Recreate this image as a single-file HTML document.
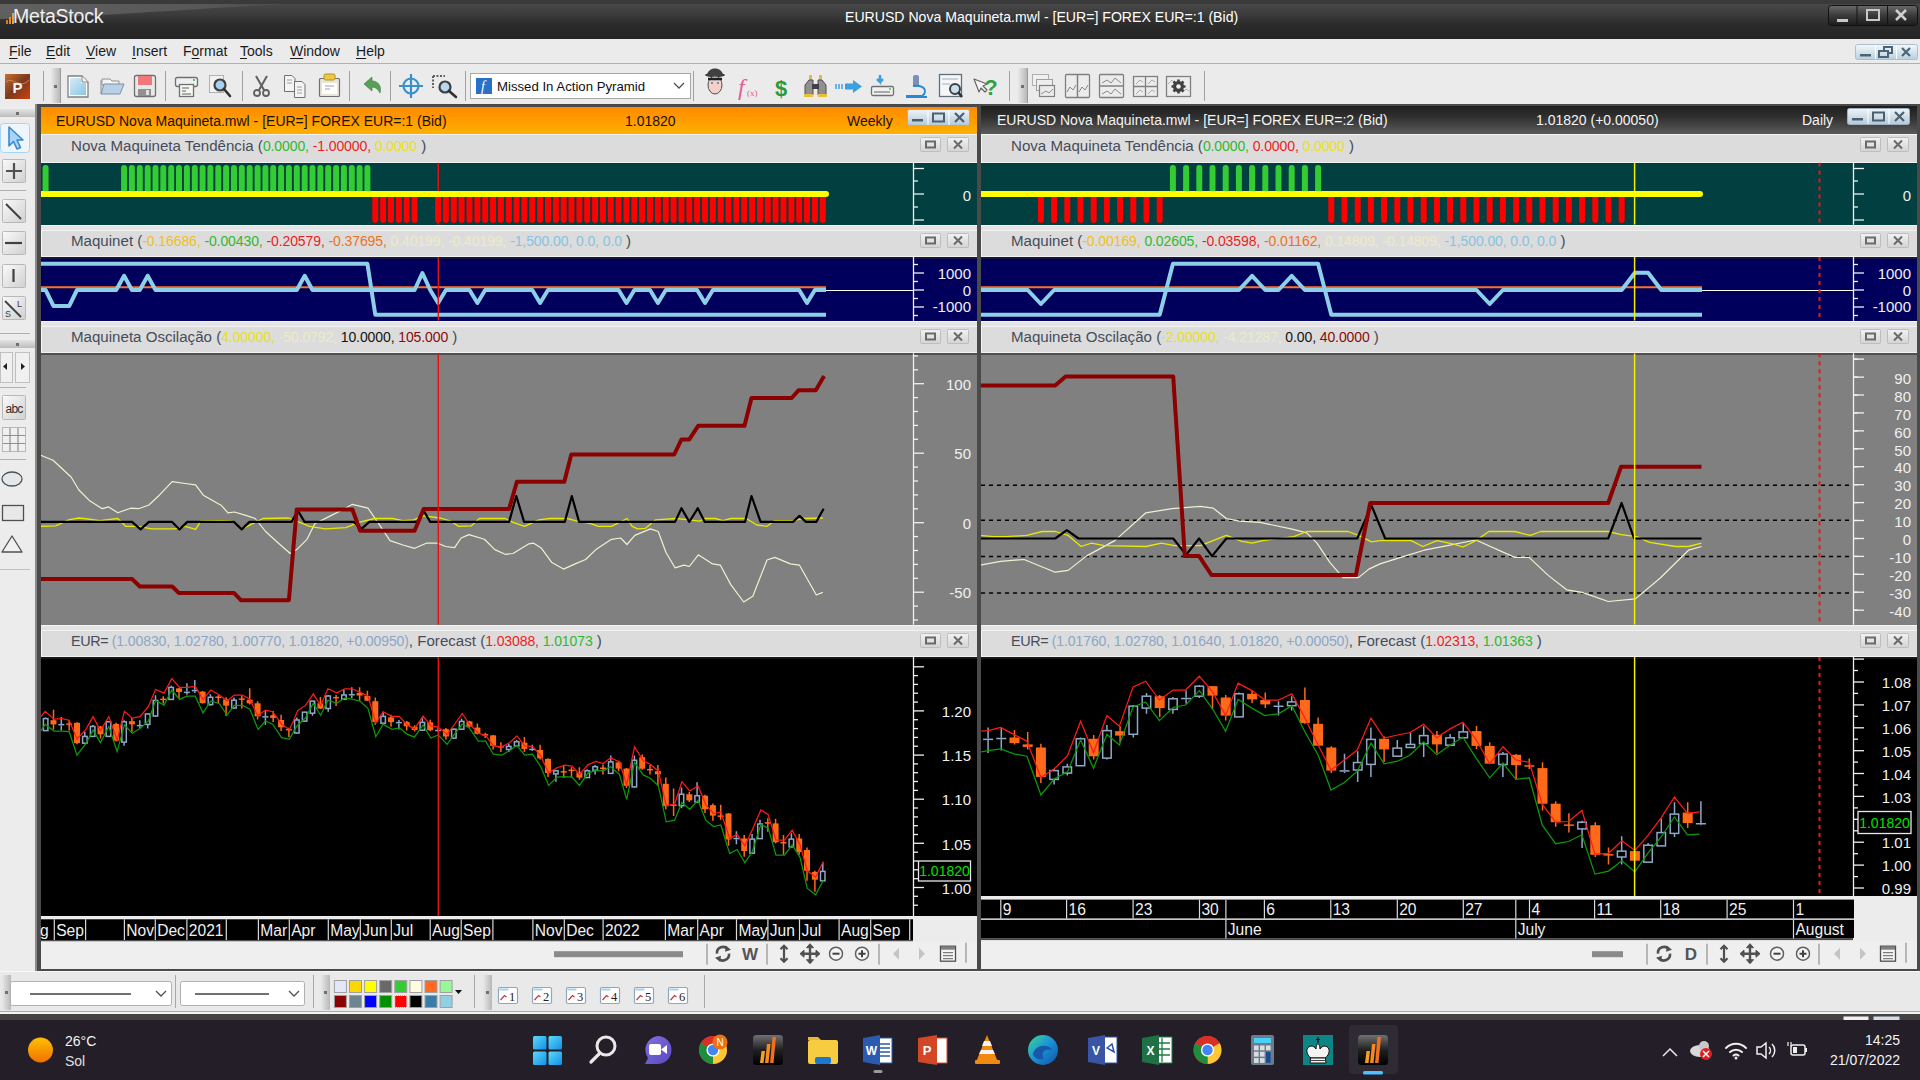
<!DOCTYPE html>
<html><head><meta charset="utf-8"><title>MetaStock</title>
<style>
html,body{margin:0;padding:0;width:1920px;height:1080px;overflow:hidden;background:#ebebeb;font-family:"Liberation Sans", sans-serif;}
div{box-sizing:border-box;}
svg{position:absolute;left:0;top:0;}
</style></head><body>
<div style="position:absolute;left:0px;top:0px;width:1920px;height:39px;background:linear-gradient(#3a3a3a 0px,#3a3a3a 3.5px,#484848 4px,#3c3c3c 14px,#2c2c2c 24px,#242424 39px);"></div><svg style="position:absolute;left:0;top:0" width="420" height="39"><defs><linearGradient id="gls" x1="0" y1="0" x2="1" y2="0"><stop offset="0" stop-color="#666"/><stop offset="0.7" stop-color="#5a5a5a"/><stop offset="1" stop-color="#484848"/></linearGradient></defs><path d="M0,4 H300 C220,6 120,16 0,19 Z" fill="url(#gls)" opacity="0.85"/></svg><svg style="position:absolute;left:5px;top:10px" width="10" height="15" viewBox="0 0 10 15"><rect x="1" y="10" width="2" height="4" fill="#e07818"/><rect x="4" y="7" width="2" height="7" fill="#f08820"/><rect x="7" y="3" width="2" height="11" fill="#f59a30"/></svg><div style="position:absolute;left:13px;top:7px;font-size:19.5px;color:#f0f0f0;white-space:pre;line-height:1;letter-spacing:-0.2px;">MetaStock</div><div style="position:absolute;left:845px;top:10px;font-size:14.1px;color:#ffffff;white-space:pre;line-height:1;">EURUSD Nova Maquineta.mwl - [EUR=] FOREX EUR=:1 (Bid)</div><svg style="position:absolute;left:1828px;top:5px" width="91" height="22" viewBox="0 0 91 22"><defs><linearGradient id="gwb" x1="0" y1="0" x2="0" y2="1"><stop offset="0" stop-color="#6a6a6a"/><stop offset="0.5" stop-color="#3a3a3a"/><stop offset="1" stop-color="#1c1c1c"/></linearGradient></defs><rect x="0.5" y="0.5" width="89" height="20" rx="3" fill="url(#gwb)" stroke="#111"/><line x1="29" y1="1" x2="29" y2="20" stroke="#151515"/><line x1="59.5" y1="1" x2="59.5" y2="20" stroke="#151515"/><rect x="9" y="14" width="11" height="3" fill="#c8c8c8"/><rect x="39" y="5" width="12" height="10" fill="none" stroke="#c8c8c8" stroke-width="2"/><path d="M68,5 L78,15 M78,5 L68,15" stroke="#d0d0d0" stroke-width="2.5"/></svg><div style="position:absolute;left:0px;top:39px;width:1920px;height:25px;background:#ebebeb;border-bottom:1px solid #b0b0b0;box-sizing:border-box;"></div><div style="position:absolute;left:9px;top:44px;font-size:14px;color:#1a1a1a;white-space:pre;line-height:1;text-decoration-thickness:1px;text-underline-offset:2px;"><u>F</u>ile</div><div style="position:absolute;left:46px;top:44px;font-size:14px;color:#1a1a1a;white-space:pre;line-height:1;text-decoration-thickness:1px;text-underline-offset:2px;"><u>E</u>dit</div><div style="position:absolute;left:86px;top:44px;font-size:14px;color:#1a1a1a;white-space:pre;line-height:1;text-decoration-thickness:1px;text-underline-offset:2px;"><u>V</u>iew</div><div style="position:absolute;left:132px;top:44px;font-size:14px;color:#1a1a1a;white-space:pre;line-height:1;text-decoration-thickness:1px;text-underline-offset:2px;"><u>I</u>nsert</div><div style="position:absolute;left:183px;top:44px;font-size:14px;color:#1a1a1a;white-space:pre;line-height:1;text-decoration-thickness:1px;text-underline-offset:2px;">F<u>o</u>rmat</div><div style="position:absolute;left:240px;top:44px;font-size:14px;color:#1a1a1a;white-space:pre;line-height:1;text-decoration-thickness:1px;text-underline-offset:2px;"><u>T</u>ools</div><div style="position:absolute;left:290px;top:44px;font-size:14px;color:#1a1a1a;white-space:pre;line-height:1;text-decoration-thickness:1px;text-underline-offset:2px;"><u>W</u>indow</div><div style="position:absolute;left:356px;top:44px;font-size:14px;color:#1a1a1a;white-space:pre;line-height:1;text-decoration-thickness:1px;text-underline-offset:2px;"><u>H</u>elp</div><svg style="position:absolute;left:1855px;top:44px" width="64" height="17" viewBox="0 0 64 17"><defs><linearGradient id="gmdi" x1="0" y1="0" x2="0" y2="1"><stop offset="0" stop-color="#f4f8fb"/><stop offset="1" stop-color="#b8d0de"/></linearGradient></defs><rect x="0.5" y="0.5" width="62" height="15" rx="2" fill="url(#gmdi)" stroke="#a8c0d0"/><line x1="20.5" y1="1" x2="20.5" y2="15" stroke="#fff"/><line x1="41.5" y1="1" x2="41.5" y2="15" stroke="#fff"/><rect x="5" y="10" width="11" height="2.5" fill="#4a6478"/><rect x="24" y="7" width="9" height="6" fill="none" stroke="#4a6478" stroke-width="2"/><path d="M29,6 V3 H37 V9 H34" fill="none" stroke="#4a6478" stroke-width="2"/><path d="M47,4 L55,12 M55,4 L47,12" stroke="#4a6478" stroke-width="2.2"/></svg><div style="position:absolute;left:0px;top:64px;width:1920px;height:40px;background:#ebebeb;"></div><svg style="position:absolute;left:0px;top:0px" width="1220" height="105" viewBox="0 0 1220 105"><defs>
<linearGradient id="gbtn" x1="0" y1="0" x2="1" y2="1"><stop offset="0" stop-color="#fafafa"/><stop offset="1" stop-color="#d0d0d0"/></linearGradient>
<linearGradient id="gdoc" x1="0" y1="0" x2="1" y2="1"><stop offset="0" stop-color="#d8ecf8"/><stop offset="1" stop-color="#8cc4e4"/></linearGradient>
<linearGradient id="gP" x1="0" y1="0" x2="1" y2="1"><stop offset="0" stop-color="#c87030"/><stop offset="0.5" stop-color="#7a3a20"/><stop offset="1" stop-color="#d04010"/></linearGradient>
<linearGradient id="ggrip" x1="0" y1="0" x2="1" y2="0"><stop offset="0" stop-color="#e8e8e8"/><stop offset="1" stop-color="#b8b8b8"/></linearGradient>
<linearGradient id="ggripv" x1="0" y1="0" x2="0" y2="1"><stop offset="0" stop-color="#e4e4e4"/><stop offset="1" stop-color="#bcbcbc"/></linearGradient>
</defs><rect x="5" y="74" width="25" height="25" fill="url(#gP)"/><path d="M6,82 C12,76 20,90 29,80" stroke="#e8a060" stroke-width="1" fill="none" opacity="0.7"/><text x="17.5" y="93" text-anchor="middle" font-family="Liberation Sans" font-weight="bold" font-size="15" fill="#f4f4f4">P</text><line x1="43.5" y1="71" x2="43.5" y2="101" stroke="#a0a0a0" stroke-width="1"/><line x1="165.5" y1="71" x2="165.5" y2="101" stroke="#a0a0a0" stroke-width="1"/><line x1="242.5" y1="71" x2="242.5" y2="101" stroke="#a0a0a0" stroke-width="1"/><line x1="349.5" y1="71" x2="349.5" y2="101" stroke="#a0a0a0" stroke-width="1"/><line x1="390.5" y1="71" x2="390.5" y2="101" stroke="#a0a0a0" stroke-width="1"/><line x1="465.5" y1="71" x2="465.5" y2="101" stroke="#a0a0a0" stroke-width="1"/><line x1="693.5" y1="71" x2="693.5" y2="101" stroke="#a0a0a0" stroke-width="1"/><line x1="1009.5" y1="71" x2="1009.5" y2="101" stroke="#a0a0a0" stroke-width="1"/><line x1="1204.5" y1="71" x2="1204.5" y2="101" stroke="#a0a0a0" stroke-width="1"/><rect x="51" y="68" width="9" height="35" fill="url(#ggrip)"/><line x1="60.5" y1="68" x2="60.5" y2="103" stroke="#9a9a9a"/><rect x="54" y="85" width="3" height="3" fill="#707070"/><rect x="1018" y="68" width="9" height="35" fill="url(#ggrip)"/><line x1="1027.5" y1="68" x2="1027.5" y2="103" stroke="#9a9a9a"/><rect x="1021" y="85" width="3" height="3" fill="#707070"/><path d="M68,76 H82 L88,82 V97 H68 Z" fill="#fff" stroke="#808080" stroke-width="1.3"/><path d="M70,78 H81 V83 H86 V95 H70 Z" fill="url(#gdoc)"/><path d="M82,76 V82 H88" fill="#f4f4f4" stroke="#808080" stroke-width="1"/><path d="M102,79 H110 L112,81 H119 V85 H102 Z" fill="#f4f4f4" stroke="#909090"/><path d="M101,94 L104,84 H124 L120,94 Z" fill="#b8d0e8" stroke="#8090a0"/><path d="M101,94 V80" stroke="#909090"/><rect x="134.5" y="75.5" width="21" height="21" rx="2" fill="#e8e8e8" stroke="#707070" stroke-width="1.3"/><rect x="138" y="76" width="14" height="9" fill="#f07878"/><rect x="138" y="89" width="13" height="7" fill="#909090"/><rect x="146" y="90" width="3" height="5" fill="#e0e0e0"/><rect x="175.5" y="77.5" width="22" height="9" rx="2" fill="#f0f0f0" stroke="#707070" stroke-width="1.3"/><rect x="179.5" y="84.5" width="14" height="12" fill="#f4f8f0" stroke="#707070" stroke-width="1.3"/><line x1="182" y1="88" x2="189" y2="88" stroke="#606060"/><line x1="182" y1="91" x2="186" y2="91" stroke="#606060"/><line x1="182" y1="94" x2="191" y2="94" stroke="#606060"/><circle cx="194" cy="80" r="1" fill="#40b040"/><rect x="209.5" y="75.5" width="14" height="17" fill="#f2f2f2" stroke="#b0b0b0"/><circle cx="220" cy="85" r="5.5" fill="#a8d0f0" stroke="#404040" stroke-width="2.2"/><line x1="224" y1="89" x2="230" y2="96" stroke="#303030" stroke-width="2.6" stroke-linecap="round"/><path d="M256,76 L264,90 M267,76 L259,90" stroke="#606060" stroke-width="2"/><circle cx="257" cy="93" r="3" fill="none" stroke="#606060" stroke-width="1.8"/><circle cx="266" cy="93" r="3" fill="none" stroke="#606060" stroke-width="1.8"/><path d="M284.5,75.5 H292 L295,78.5 V91.5 H284.5 Z" fill="#f4f4f4" stroke="#707070"/><path d="M294.5,81.5 H302 L305,84.5 V97.5 H294.5 Z" fill="#f4f4f4" stroke="#707070"/><path d="M287,80 H292 M287,83 H292 M297,87 H302 M297,90 H302 M297,93 H302" stroke="#a0a0a0"/><rect x="319.5" y="78.5" width="20" height="18" rx="1" fill="#e8e4d8" stroke="#707070" stroke-width="1.2"/><rect x="322" y="83" width="15" height="11" fill="#fff"/><rect x="324" y="74" width="11" height="6" rx="1.5" fill="#f0c840" stroke="#b09020"/><path d="M325,86 H334 M325,89 H330" stroke="#a0a0a0"/><path d="M364,84 L372,77 V81 C378,81 382,86 380,93 C378,89 375,87 372,87 V91 Z" fill="#58a058" stroke="#3a7a3a" stroke-width="0.6"/><circle cx="411" cy="86" r="7.5" fill="#e8eef4" stroke="#3a90c8" stroke-width="2.2"/><path d="M411,74 V98 M399,86 H423" stroke="#3a90c8" stroke-width="2.2"/><path d="M433,76 H445 M433,76 V88" stroke="#606060" stroke-width="2" stroke-dasharray="2,1.5"/><circle cx="445" cy="87" r="5.5" fill="#b8d8f0" stroke="#404040" stroke-width="2.2"/><line x1="449" y1="91" x2="456" y2="97" stroke="#303030" stroke-width="2.6" stroke-linecap="round"/><rect x="470.5" y="73.5" width="220" height="25" fill="#fff" stroke="#a8a8a8"/><rect x="476" y="78" width="16" height="16" fill="#2a70c8"/><text x="483" y="91" text-anchor="middle" font-family="Liberation Serif" font-style="italic" font-size="14" fill="#fff">f</text><text x="497" y="91" font-family="Liberation Sans" font-size="13.2" fill="#101010">Missed In Action Pyramid</text><path d="M674,83 L679,88 L684,83" fill="none" stroke="#505050" stroke-width="1.3"/><ellipse cx="715" cy="75" rx="10" ry="2" fill="#303030"/><path d="M707,76 C707,66 723,66 723,76 Z" fill="#404040"/><ellipse cx="715" cy="85" rx="7" ry="9" fill="#f4d0c8" stroke="#505050"/><path d="M708,79 H722" stroke="#202020" stroke-width="2.5"/><circle cx="712" cy="83" r="1" fill="#4080c0"/><circle cx="718" cy="83" r="1" fill="#4080c0"/><text x="738" y="95" font-family="Liberation Serif" font-style="italic" font-size="24" fill="#e06090">f</text><text x="747" y="96" font-family="Liberation Serif" font-size="9" fill="#e06090">(x)</text><text x="781" y="96" text-anchor="middle" font-family="Liberation Sans" font-weight="bold" font-size="22" fill="#2a9a3a">$</text><rect x="809" y="75" width="3" height="6" fill="#d8c050"/><rect x="819" y="75" width="3" height="6" fill="#d8c050"/><path d="M805,95 V85 L809,80 H813 V95 Z M826,95 V85 L822,80 H818 V95 Z" fill="#909090" stroke="#505050"/><rect x="812" y="84" width="7" height="5" fill="#404040"/><rect x="804" y="94" width="9" height="3" fill="#e8c040"/><rect x="818" y="94" width="9" height="3" fill="#e8c040"/><path d="M836,84 V89 M839,84 V89 M842,84 V89" stroke="#40a0e0" stroke-width="1.5"/><path d="M845,83.5 H853 V80 L862,86.5 L853,93 V89.5 H845 Z" fill="#3aa0e0"/><path d="M880,75 V82 L877,79 M880,82 L883,79" stroke="#3aa0e0" stroke-width="2.5" fill="none"/><rect x="871.5" y="86.5" width="22" height="9" rx="1.5" fill="#f0f0f0" stroke="#707070" stroke-width="1.3"/><line x1="874" y1="92" x2="890" y2="92" stroke="#606060"/><circle cx="890" cy="89" r="0.9" fill="#40c040"/><rect x="913" y="75" width="6" height="12" rx="2" fill="#7a90b8"/><path d="M913,86 C925,84 928,92 922,96 H906" fill="none" stroke="#2a88d0" stroke-width="2"/><line x1="906" y1="97" x2="927" y2="97" stroke="#2a88d0" stroke-width="2"/><rect x="939.5" y="74.5" width="22" height="22" fill="#f4f6f8" stroke="#607080" stroke-width="1.3"/><path d="M942,79 H958 M942,84 H950" stroke="#a0b0c0"/><circle cx="955" cy="89" r="5" fill="#c8e0f0" stroke="#404040" stroke-width="2"/><line x1="958" y1="92" x2="962" y2="97" stroke="#303030" stroke-width="2.5"/><path d="M974,79 L979,92 L981,88 L985,92 L987,90 L983,86 L987,84 Z" fill="#f4f4f4" stroke="#606060" stroke-width="1.1" stroke-linejoin="round"/><text x="991" y="95" text-anchor="middle" font-family="Liberation Sans" font-weight="bold" font-size="22" fill="#30a040">?</text><rect x="1032.5" y="74.5" width="16" height="11" fill="#f0f0f0" stroke="#b0b0b0"/><rect x="1036.5" y="79.5" width="16" height="11" fill="#eee" stroke="#a0a0a0"/><rect x="1039.5" y="85.5" width="15" height="11" fill="#eaeaea" stroke="#808080" stroke-width="1.2"/><path d="M1041,94 L1046,91 L1049,93 L1053,89" fill="none" stroke="#909090"/><rect x="1065.5" y="74.5" width="24" height="23" rx="1" fill="#ececec" stroke="#808080" stroke-width="1.3"/><rect x="1099.5" y="74.5" width="24" height="23" rx="1" fill="#ececec" stroke="#808080" stroke-width="1.3"/><line x1="1077.5" y1="75" x2="1077.5" y2="97" stroke="#808080" stroke-width="1.5"/><path d="M1067,92 L1070,87 L1073,90 L1076,85 M1079,92 L1082,87 L1085,90 L1088,85" fill="none" stroke="#888"/><line x1="1100" y1="86" x2="1123" y2="86" stroke="#808080" stroke-width="1.5"/><path d="M1102,83 L1107,80 L1111,83 L1115,78 L1121,83 M1102,94 L1107,91 L1111,94 L1115,89 L1121,94" fill="none" stroke="#888"/><rect x="1133.5" y="76.5" width="24" height="20" fill="#ececec" stroke="#808080" stroke-width="1.3"/><path d="M1145.5,77 V96 M1134,86.5 H1157" stroke="#808080" stroke-width="1.3"/><path d="M1136,84 L1140,80 L1143,82 M1148,84 L1152,80 L1155,82 M1136,94 L1140,90 L1143,92 M1148,94 L1152,90 L1155,92" fill="none" stroke="#a0a0a0" stroke-width="0.9"/><rect x="1166.5" y="76.5" width="24" height="20" fill="#ececec" stroke="#808080" stroke-width="1.3"/><path d="M1168,84 L1172,80 L1175,83 M1182,93 L1186,89 L1189,91" fill="none" stroke="#a8a8a8" stroke-width="0.9"/><circle cx="1178.5" cy="86.5" r="5.5" fill="#404040"/><path d="M1178.5,79.5 V93.5 M1171.5,86.5 H1185.5 M1173.5,81.5 L1183.5,91.5 M1183.5,81.5 L1173.5,91.5" stroke="#404040" stroke-width="2.6"/><circle cx="1178.5" cy="86.5" r="2.3" fill="#f0f0f0"/></svg><div style="position:absolute;left:35px;top:104px;width:1885px;height:867px;background:#4a4a4a;"></div><div style="position:absolute;left:35px;top:104px;width:2px;height:867px;background:#8a8a8a;"></div><div style="position:absolute;left:0px;top:104px;width:35px;height:867px;background:#ececec;"></div><svg style="position:absolute;left:0px;top:0px" width="36" height="580" viewBox="0 0 36 580"><defs>
<linearGradient id="gbtn" x1="0" y1="0" x2="1" y2="1"><stop offset="0" stop-color="#fafafa"/><stop offset="1" stop-color="#d0d0d0"/></linearGradient>
<linearGradient id="gdoc" x1="0" y1="0" x2="1" y2="1"><stop offset="0" stop-color="#d8ecf8"/><stop offset="1" stop-color="#8cc4e4"/></linearGradient>
<linearGradient id="gP" x1="0" y1="0" x2="1" y2="1"><stop offset="0" stop-color="#c87030"/><stop offset="0.5" stop-color="#7a3a20"/><stop offset="1" stop-color="#d04010"/></linearGradient>
<linearGradient id="ggrip" x1="0" y1="0" x2="1" y2="0"><stop offset="0" stop-color="#e8e8e8"/><stop offset="1" stop-color="#b8b8b8"/></linearGradient>
<linearGradient id="ggripv" x1="0" y1="0" x2="0" y2="1"><stop offset="0" stop-color="#e4e4e4"/><stop offset="1" stop-color="#bcbcbc"/></linearGradient>
</defs><rect x="0" y="109" width="35" height="8" fill="url(#ggripv)"/><rect x="16" y="112" width="3" height="3" fill="#707070"/><rect x="0" y="340" width="35" height="8" fill="url(#ggripv)"/><rect x="16" y="343" width="3" height="3" fill="#707070"/><rect x="0.5" y="123.5" width="29" height="29" rx="3" fill="#eef6fc" stroke="#a8d4f4"/><path d="M9,127 L9,146 L13.5,141.5 L17,149 L20.5,147.5 L17,140 L23,140 Z" fill="#a8d4f8" stroke="#3a88d0" stroke-width="1.6" stroke-linejoin="round"/><rect x="2.5" y="159.5" width="23" height="23" rx="1" fill="url(#gbtn)" stroke="#b8b8b8"/><path d="M14,163 V179 M6,171 H22" stroke="#505050" stroke-width="2.2"/><line x1="0" y1="190.5" x2="26" y2="190.5" stroke="#b0b0b0"/><rect x="2.5" y="199.5" width="23" height="23" rx="1" fill="url(#gbtn)" stroke="#b8b8b8"/><path d="M6,204 L21,219" stroke="#404040" stroke-width="2"/><rect x="2.5" y="231.5" width="23" height="23" rx="1" fill="url(#gbtn)" stroke="#b8b8b8"/><path d="M5,243 H22" stroke="#404040" stroke-width="2.2"/><rect x="2.5" y="264.5" width="23" height="23" rx="1" fill="url(#gbtn)" stroke="#b8b8b8"/><path d="M13.5,269 V282" stroke="#404040" stroke-width="2.2"/><rect x="2.5" y="296.5" width="23" height="23" rx="1" fill="url(#gbtn)" stroke="#b8b8b8"/><path d="M5,301 L21,317" stroke="#404040" stroke-width="1.8"/><text x="5" y="317" font-family="Liberation Sans" font-size="9" fill="#404040">S</text><text x="17" y="307" font-family="Liberation Sans" font-size="9" fill="#404040">L</text><line x1="0" y1="333.5" x2="30" y2="333.5" stroke="#b0b0b0"/><rect x="0.5" y="352.5" width="12" height="30" fill="#f0f0f0" stroke="#c0c0c0"/><rect x="15.5" y="352.5" width="14" height="30" fill="#f0f0f0" stroke="#c0c0c0"/><path d="M3,366.5 L7,363 V370 Z" fill="#202020"/><path d="M21,363 L25,366.5 L21,370 Z" fill="#202020"/><line x1="0" y1="387.5" x2="26" y2="387.5" stroke="#b0b0b0"/><rect x="2.5" y="395.5" width="23" height="24" rx="1" fill="url(#gbtn)" stroke="#b8b8b8"/><text x="14" y="413" text-anchor="middle" font-family="Liberation Sans" font-size="12" fill="#303030" letter-spacing="-0.8">abc</text><rect x="2.5" y="427.5" width="23" height="24" fill="#f0f0f0" stroke="#b8b8b8"/><path d="M10,428 V451 M18,428 V451 M3,435.5 H25 M3,443.5 H25" stroke="#909090" stroke-width="1.2"/><line x1="0" y1="459.5" x2="26" y2="459.5" stroke="#b0b0b0"/><ellipse cx="12" cy="479" rx="10" ry="7" fill="#e4e8ec" stroke="#505050" stroke-width="1.3"/><rect x="2.5" y="505.5" width="21" height="15" fill="#e8e8e8" stroke="#505050" stroke-width="1.3"/><path d="M12,536 L22,552 H2 Z" fill="#f0f0f0" stroke="#505050" stroke-width="1.3" stroke-linejoin="round"/><line x1="0" y1="569.5" x2="30" y2="569.5" stroke="#c0c0c0"/></svg><div style="position:absolute;left:41px;top:107px;width:936px;height:862px;background:#ebebeb;"></div><div style="position:absolute;left:41px;top:107px;width:936px;height:27px;background:linear-gradient(#ff8a00,#ffb000);"></div><div style="position:absolute;left:56px;top:113.8px;font-size:14px;color:#1a1000;white-space:pre;line-height:1;">EURUSD Nova Maquineta.mwl - [EUR=] FOREX EUR=:1 (Bid)</div><div style="position:absolute;left:625px;top:113.8px;font-size:14px;color:#1a1000;white-space:pre;line-height:1;">1.01820</div><div style="position:absolute;left:847px;top:113.8px;font-size:14px;color:#1a1000;white-space:pre;line-height:1;">Weekly</div><svg style="position:absolute;left:907px;top:109px" width="64" height="18" viewBox="0 0 64 18"><defs><linearGradient id="gwin" x1="0" y1="0" x2="0" y2="1"><stop offset="0" stop-color="#eef4f8"/><stop offset="1" stop-color="#b4c8d8"/></linearGradient></defs><rect x="0.5" y="0.5" width="62" height="16" rx="2" fill="url(#gwin)" stroke="#9ab0c0"/><line x1="21" y1="1" x2="21" y2="16" stroke="#fff"/><line x1="42" y1="1" x2="42" y2="16" stroke="#fff"/><rect x="5" y="10" width="11" height="2.5" fill="#4a6070"/><rect x="26" y="4.5" width="11" height="8" fill="none" stroke="#4a6070" stroke-width="2"/><path d="M48,4 L57,13 M57,4 L48,13" stroke="#4a6070" stroke-width="2.2"/></svg><div style="position:absolute;left:981px;top:107px;width:936px;height:862px;background:#ebebeb;"></div><div style="position:absolute;left:981px;top:106px;width:936px;height:27.5px;background:linear-gradient(#1e1e1e 0%,#303030 40%,#5a5a5a 100%);"></div><div style="position:absolute;left:997px;top:112.8px;font-size:14px;color:#f4f4f4;white-space:pre;line-height:1;">EURUSD Nova Maquineta.mwl - [EUR=] FOREX EUR=:2 (Bid)</div><div style="position:absolute;left:1536px;top:112.8px;font-size:14px;color:#f4f4f4;white-space:pre;line-height:1;">1.01820 (+0.00050)</div><div style="position:absolute;left:1802px;top:112.8px;font-size:14px;color:#f4f4f4;white-space:pre;line-height:1;">Daily</div><svg style="position:absolute;left:1847px;top:108px" width="64" height="18" viewBox="0 0 64 18"><defs><linearGradient id="gwin" x1="0" y1="0" x2="0" y2="1"><stop offset="0" stop-color="#eef4f8"/><stop offset="1" stop-color="#b4c8d8"/></linearGradient></defs><rect x="0.5" y="0.5" width="62" height="16" rx="2" fill="url(#gwin)" stroke="#9ab0c0"/><line x1="21" y1="1" x2="21" y2="16" stroke="#fff"/><line x1="42" y1="1" x2="42" y2="16" stroke="#fff"/><rect x="5" y="10" width="11" height="2.5" fill="#4a6070"/><rect x="26" y="4.5" width="11" height="8" fill="none" stroke="#4a6070" stroke-width="2"/><path d="M48,4 L57,13 M57,4 L48,13" stroke="#4a6070" stroke-width="2.2"/></svg><div style="position:absolute;left:41px;top:134px;width:936px;height:28.5px;background:#dcdcdc;border-top:1px solid #f2f2f2;border-left:1px solid #f6f6f6;border-bottom:1px solid #f2f2f2;box-sizing:border-box;"></div><div style="position:absolute;left:71px;top:138.0px;font-size:15.1px;color:#474c5a;white-space:pre;line-height:1;"><span style="color:#474c5a;font-size:15.1px">Nova Maquineta Tendência (</span><span style="color:#2fb82f;font-size:14px;letter-spacing:-0.1px">0.0000, </span><span style="color:#ee1c1c;font-size:14px;letter-spacing:-0.1px">-1.00000, </span><span style="color:#e8e020;font-size:14px;letter-spacing:-0.1px">0.0000</span><span style="color:#474c5a;font-size:15.1px"> )</span></div><svg style="position:absolute;left:920px;top:137.3px" width="50" height="16" viewBox="0 0 50 16"><defs><linearGradient id="ghb" x1="0" y1="0" x2="0" y2="1"><stop offset="0" stop-color="#f2f2f2"/><stop offset="1" stop-color="#d4d4d4"/></linearGradient></defs><rect x="0.5" y="0.5" width="20" height="14" rx="1" fill="url(#ghb)" stroke="#bdbdbd"/><rect x="27.5" y="0.5" width="21" height="14" rx="1" fill="url(#ghb)" stroke="#bdbdbd"/><rect x="6" y="4.5" width="9" height="6" fill="none" stroke="#6a6a6a" stroke-width="2"/><path d="M34,3.5 L42,11.5 M42,3.5 L34,11.5" stroke="#6a6a6a" stroke-width="2"/></svg><div style="position:absolute;left:41px;top:224.8px;width:936px;height:5.2px;background:#e4e4e4;border-top:1px solid #f6f6f6;box-sizing:border-box;"></div><div style="position:absolute;left:41px;top:230.0px;width:936px;height:27.0px;background:#dcdcdc;border-top:1px solid #f2f2f2;border-left:1px solid #f6f6f6;border-bottom:1px solid #f2f2f2;box-sizing:border-box;"></div><div style="position:absolute;left:71px;top:232.5px;font-size:15.1px;color:#474c5a;white-space:pre;line-height:1;"><span style="color:#474c5a;font-size:15.1px">Maquinet (</span><span style="color:#f0c020;font-size:14px;letter-spacing:-0.1px">-0.16686, </span><span style="color:#2fb82f;font-size:14px;letter-spacing:-0.1px">-0.00430, </span><span style="color:#ee1c1c;font-size:14px;letter-spacing:-0.1px">-0.20579, </span><span style="color:#f07020;font-size:14px;letter-spacing:-0.1px">-0.37695, </span><span style="color:#ecebc8;font-size:14px;letter-spacing:-0.1px">0.40199, </span><span style="color:#ecebc8;font-size:14px;letter-spacing:-0.1px">-0.40199, </span><span style="color:#87c3e0;font-size:14px;letter-spacing:-0.1px">-1,500.00, 0.0, 0.0</span><span style="color:#474c5a;font-size:15.1px"> )</span></div><svg style="position:absolute;left:920px;top:233.3px" width="50" height="16" viewBox="0 0 50 16"><defs><linearGradient id="ghb" x1="0" y1="0" x2="0" y2="1"><stop offset="0" stop-color="#f2f2f2"/><stop offset="1" stop-color="#d4d4d4"/></linearGradient></defs><rect x="0.5" y="0.5" width="20" height="14" rx="1" fill="url(#ghb)" stroke="#bdbdbd"/><rect x="27.5" y="0.5" width="21" height="14" rx="1" fill="url(#ghb)" stroke="#bdbdbd"/><rect x="6" y="4.5" width="9" height="6" fill="none" stroke="#6a6a6a" stroke-width="2"/><path d="M34,3.5 L42,11.5 M42,3.5 L34,11.5" stroke="#6a6a6a" stroke-width="2"/></svg><div style="position:absolute;left:41px;top:320.8px;width:936px;height:5.2px;background:#e4e4e4;border-top:1px solid #f6f6f6;box-sizing:border-box;"></div><div style="position:absolute;left:41px;top:326.0px;width:936px;height:27.30000000000001px;background:#dcdcdc;border-top:1px solid #f2f2f2;border-left:1px solid #f6f6f6;border-bottom:1px solid #f2f2f2;box-sizing:border-box;"></div><div style="position:absolute;left:71px;top:328.8px;font-size:15.1px;color:#474c5a;white-space:pre;line-height:1;"><span style="color:#474c5a;font-size:15.1px">Maquineta Oscilação (</span><span style="color:#e8e020;font-size:14px;letter-spacing:-0.1px">4.00000, </span><span style="color:#ecebc8;font-size:14px;letter-spacing:-0.1px">-50.0792, </span><span style="color:#141414;font-size:14px;letter-spacing:-0.1px">10.0000, </span><span style="color:#8b0a0a;font-size:14px;letter-spacing:-0.1px">105.000</span><span style="color:#474c5a;font-size:15.1px"> )</span></div><svg style="position:absolute;left:920px;top:329.3px" width="50" height="16" viewBox="0 0 50 16"><defs><linearGradient id="ghb" x1="0" y1="0" x2="0" y2="1"><stop offset="0" stop-color="#f2f2f2"/><stop offset="1" stop-color="#d4d4d4"/></linearGradient></defs><rect x="0.5" y="0.5" width="20" height="14" rx="1" fill="url(#ghb)" stroke="#bdbdbd"/><rect x="27.5" y="0.5" width="21" height="14" rx="1" fill="url(#ghb)" stroke="#bdbdbd"/><rect x="6" y="4.5" width="9" height="6" fill="none" stroke="#6a6a6a" stroke-width="2"/><path d="M34,3.5 L42,11.5 M42,3.5 L34,11.5" stroke="#6a6a6a" stroke-width="2"/></svg><div style="position:absolute;left:41px;top:624.7px;width:936px;height:5.2px;background:#e4e4e4;border-top:1px solid #f6f6f6;box-sizing:border-box;"></div><div style="position:absolute;left:41px;top:629.9000000000001px;width:936px;height:27.09999999999991px;background:#dcdcdc;border-top:1px solid #f2f2f2;border-left:1px solid #f6f6f6;border-bottom:1px solid #f2f2f2;box-sizing:border-box;"></div><div style="position:absolute;left:71px;top:632.5px;font-size:15.1px;color:#474c5a;white-space:pre;line-height:1;"><span style="color:#474c5a;font-size:14.4px;letter-spacing:-0.4px">EUR= </span><span style="color:#8aa6c8;font-size:14px;letter-spacing:-0.1px">(1.00830, 1.02780, 1.00770, 1.01820, +0.00950)</span><span style="color:#474c5a;font-size:15.1px">, Forecast (</span><span style="color:#ee1c1c;font-size:14px;letter-spacing:-0.1px">1.03088, </span><span style="color:#2fb82f;font-size:14px;letter-spacing:-0.1px">1.01073</span><span style="color:#474c5a;font-size:15.1px"> )</span></div><svg style="position:absolute;left:920px;top:633.2px" width="50" height="16" viewBox="0 0 50 16"><defs><linearGradient id="ghb" x1="0" y1="0" x2="0" y2="1"><stop offset="0" stop-color="#f2f2f2"/><stop offset="1" stop-color="#d4d4d4"/></linearGradient></defs><rect x="0.5" y="0.5" width="20" height="14" rx="1" fill="url(#ghb)" stroke="#bdbdbd"/><rect x="27.5" y="0.5" width="21" height="14" rx="1" fill="url(#ghb)" stroke="#bdbdbd"/><rect x="6" y="4.5" width="9" height="6" fill="none" stroke="#6a6a6a" stroke-width="2"/><path d="M34,3.5 L42,11.5 M42,3.5 L34,11.5" stroke="#6a6a6a" stroke-width="2"/></svg><div style="position:absolute;left:981px;top:134px;width:936px;height:28.5px;background:#dcdcdc;border-top:1px solid #f2f2f2;border-left:1px solid #f6f6f6;border-bottom:1px solid #f2f2f2;box-sizing:border-box;"></div><div style="position:absolute;left:1011px;top:138.0px;font-size:15.1px;color:#474c5a;white-space:pre;line-height:1;"><span style="color:#474c5a;font-size:15.1px">Nova Maquineta Tendência (</span><span style="color:#2fb82f;font-size:14px;letter-spacing:-0.1px">0.0000, </span><span style="color:#ee1c1c;font-size:14px;letter-spacing:-0.1px">0.0000, </span><span style="color:#e8e020;font-size:14px;letter-spacing:-0.1px">0.0000</span><span style="color:#474c5a;font-size:15.1px"> )</span></div><svg style="position:absolute;left:1860px;top:137.3px" width="50" height="16" viewBox="0 0 50 16"><defs><linearGradient id="ghb" x1="0" y1="0" x2="0" y2="1"><stop offset="0" stop-color="#f2f2f2"/><stop offset="1" stop-color="#d4d4d4"/></linearGradient></defs><rect x="0.5" y="0.5" width="20" height="14" rx="1" fill="url(#ghb)" stroke="#bdbdbd"/><rect x="27.5" y="0.5" width="21" height="14" rx="1" fill="url(#ghb)" stroke="#bdbdbd"/><rect x="6" y="4.5" width="9" height="6" fill="none" stroke="#6a6a6a" stroke-width="2"/><path d="M34,3.5 L42,11.5 M42,3.5 L34,11.5" stroke="#6a6a6a" stroke-width="2"/></svg><div style="position:absolute;left:981px;top:224.8px;width:936px;height:5.2px;background:#e4e4e4;border-top:1px solid #f6f6f6;box-sizing:border-box;"></div><div style="position:absolute;left:981px;top:230.0px;width:936px;height:27.0px;background:#dcdcdc;border-top:1px solid #f2f2f2;border-left:1px solid #f6f6f6;border-bottom:1px solid #f2f2f2;box-sizing:border-box;"></div><div style="position:absolute;left:1011px;top:232.5px;font-size:15.1px;color:#474c5a;white-space:pre;line-height:1;"><span style="color:#474c5a;font-size:15.1px">Maquinet (</span><span style="color:#f0c020;font-size:14px;letter-spacing:-0.1px">-0.00169, </span><span style="color:#2fb82f;font-size:14px;letter-spacing:-0.1px">0.02605, </span><span style="color:#ee1c1c;font-size:14px;letter-spacing:-0.1px">-0.03598, </span><span style="color:#f07020;font-size:14px;letter-spacing:-0.1px">-0.01162, </span><span style="color:#ecebc8;font-size:14px;letter-spacing:-0.1px">0.14809, </span><span style="color:#ecebc8;font-size:14px;letter-spacing:-0.1px">-0.14809, </span><span style="color:#87c3e0;font-size:14px;letter-spacing:-0.1px">-1,500.00, 0.0, 0.0</span><span style="color:#474c5a;font-size:15.1px"> )</span></div><svg style="position:absolute;left:1860px;top:233.3px" width="50" height="16" viewBox="0 0 50 16"><defs><linearGradient id="ghb" x1="0" y1="0" x2="0" y2="1"><stop offset="0" stop-color="#f2f2f2"/><stop offset="1" stop-color="#d4d4d4"/></linearGradient></defs><rect x="0.5" y="0.5" width="20" height="14" rx="1" fill="url(#ghb)" stroke="#bdbdbd"/><rect x="27.5" y="0.5" width="21" height="14" rx="1" fill="url(#ghb)" stroke="#bdbdbd"/><rect x="6" y="4.5" width="9" height="6" fill="none" stroke="#6a6a6a" stroke-width="2"/><path d="M34,3.5 L42,11.5 M42,3.5 L34,11.5" stroke="#6a6a6a" stroke-width="2"/></svg><div style="position:absolute;left:981px;top:320.8px;width:936px;height:5.2px;background:#e4e4e4;border-top:1px solid #f6f6f6;box-sizing:border-box;"></div><div style="position:absolute;left:981px;top:326.0px;width:936px;height:27.30000000000001px;background:#dcdcdc;border-top:1px solid #f2f2f2;border-left:1px solid #f6f6f6;border-bottom:1px solid #f2f2f2;box-sizing:border-box;"></div><div style="position:absolute;left:1011px;top:328.8px;font-size:15.1px;color:#474c5a;white-space:pre;line-height:1;"><span style="color:#474c5a;font-size:15.1px">Maquineta Oscilação (</span><span style="color:#e8e020;font-size:14px;letter-spacing:-0.1px">-2.00000, </span><span style="color:#ecebc8;font-size:14px;letter-spacing:-0.1px">-4.21287, </span><span style="color:#141414;font-size:14px;letter-spacing:-0.1px">0.00, </span><span style="color:#8b0a0a;font-size:14px;letter-spacing:-0.1px">40.0000</span><span style="color:#474c5a;font-size:15.1px"> )</span></div><svg style="position:absolute;left:1860px;top:329.3px" width="50" height="16" viewBox="0 0 50 16"><defs><linearGradient id="ghb" x1="0" y1="0" x2="0" y2="1"><stop offset="0" stop-color="#f2f2f2"/><stop offset="1" stop-color="#d4d4d4"/></linearGradient></defs><rect x="0.5" y="0.5" width="20" height="14" rx="1" fill="url(#ghb)" stroke="#bdbdbd"/><rect x="27.5" y="0.5" width="21" height="14" rx="1" fill="url(#ghb)" stroke="#bdbdbd"/><rect x="6" y="4.5" width="9" height="6" fill="none" stroke="#6a6a6a" stroke-width="2"/><path d="M34,3.5 L42,11.5 M42,3.5 L34,11.5" stroke="#6a6a6a" stroke-width="2"/></svg><div style="position:absolute;left:981px;top:624.7px;width:936px;height:5.2px;background:#e4e4e4;border-top:1px solid #f6f6f6;box-sizing:border-box;"></div><div style="position:absolute;left:981px;top:629.9000000000001px;width:936px;height:27.09999999999991px;background:#dcdcdc;border-top:1px solid #f2f2f2;border-left:1px solid #f6f6f6;border-bottom:1px solid #f2f2f2;box-sizing:border-box;"></div><div style="position:absolute;left:1011px;top:632.5px;font-size:15.1px;color:#474c5a;white-space:pre;line-height:1;"><span style="color:#474c5a;font-size:14.4px;letter-spacing:-0.4px">EUR= </span><span style="color:#8aa6c8;font-size:14px;letter-spacing:-0.1px">(1.01760, 1.02780, 1.01640, 1.01820, +0.00050)</span><span style="color:#474c5a;font-size:15.1px">, Forecast (</span><span style="color:#ee1c1c;font-size:14px;letter-spacing:-0.1px">1.02313, </span><span style="color:#2fb82f;font-size:14px;letter-spacing:-0.1px">1.01363</span><span style="color:#474c5a;font-size:15.1px"> )</span></div><svg style="position:absolute;left:1860px;top:633.2px" width="50" height="16" viewBox="0 0 50 16"><defs><linearGradient id="ghb" x1="0" y1="0" x2="0" y2="1"><stop offset="0" stop-color="#f2f2f2"/><stop offset="1" stop-color="#d4d4d4"/></linearGradient></defs><rect x="0.5" y="0.5" width="20" height="14" rx="1" fill="url(#ghb)" stroke="#bdbdbd"/><rect x="27.5" y="0.5" width="21" height="14" rx="1" fill="url(#ghb)" stroke="#bdbdbd"/><rect x="6" y="4.5" width="9" height="6" fill="none" stroke="#6a6a6a" stroke-width="2"/><path d="M34,3.5 L42,11.5 M42,3.5 L34,11.5" stroke="#6a6a6a" stroke-width="2"/></svg><div style="position:absolute;left:41px;top:162.5px;width:936px;height:62.3px;background:#023f40;"></div><div style="position:absolute;left:41px;top:257px;width:936px;height:63.8px;background:#00005c;"></div><div style="position:absolute;left:41px;top:353.3px;width:936px;height:271.4px;background:#808080;"></div><div style="position:absolute;left:981px;top:162.5px;width:936px;height:62.3px;background:#023f40;"></div><div style="position:absolute;left:981px;top:257px;width:936px;height:63.8px;background:#00005c;"></div><div style="position:absolute;left:981px;top:353.3px;width:936px;height:271.4px;background:#808080;"></div><div style="position:absolute;left:41px;top:657px;width:936px;height:259px;background:#000;"></div><div style="position:absolute;left:981px;top:657px;width:936px;height:239px;background:#000;"></div><div style="position:absolute;left:41px;top:162.5px;width:936px;height:1.6px;background:rgba(40,40,40,0.55);"></div><div style="position:absolute;left:41px;top:257px;width:936px;height:1.6px;background:rgba(40,40,40,0.55);"></div><div style="position:absolute;left:41px;top:353.3px;width:936px;height:1.6px;background:rgba(40,40,40,0.55);"></div><div style="position:absolute;left:41px;top:657px;width:936px;height:1.6px;background:rgba(40,40,40,0.55);"></div><div style="position:absolute;left:981px;top:162.5px;width:936px;height:1.6px;background:rgba(40,40,40,0.55);"></div><div style="position:absolute;left:981px;top:257px;width:936px;height:1.6px;background:rgba(40,40,40,0.55);"></div><div style="position:absolute;left:981px;top:353.3px;width:936px;height:1.6px;background:rgba(40,40,40,0.55);"></div><div style="position:absolute;left:981px;top:657px;width:936px;height:1.6px;background:rgba(40,40,40,0.55);"></div><svg style="position:absolute;left:0;top:0" width="1920" height="1080"><defs><clipPath id="cl"><rect x="41" y="162.5" width="872" height="62.3"/><rect x="41" y="257" width="872" height="63.8"/><rect x="41" y="353.3" width="872" height="271.4"/><rect x="41" y="657" width="872" height="259"/><rect x="981" y="162.5" width="872.5" height="62.3"/><rect x="981" y="257" width="872.5" height="63.8"/><rect x="981" y="353.3" width="872.5" height="271.4"/><rect x="981" y="657" width="872.5" height="239"/></clipPath></defs><g clip-path="url(#cl)"><line x1="438.3" y1="162.5" x2="438.3" y2="224.8" stroke="#e81010" stroke-width="1.4"/><line x1="1634.6" y1="162.5" x2="1634.6" y2="224.8" stroke="#f0f000" stroke-width="1.5"/><line x1="1819.5" y1="162.5" x2="1819.5" y2="224.8" stroke="#e81818" stroke-width="2" stroke-dasharray="4,4"/><line x1="41" y1="194" x2="826" y2="194" stroke="#ffff00" stroke-width="6" stroke-linecap="round"/><rect x="41" y="191" width="4" height="6" fill="#ffff00"/><path d="M45.6,191 V168 M124.1,191 V168 M131.9,191 V168 M139.8,191 V168 M147.7,191 V168 M155.5,191 V168 M163.3,191 V168 M171.2,191 V168 M179.0,191 V168 M186.9,191 V168 M194.8,191 V168 M202.6,191 V168 M210.4,191 V168 M218.3,191 V168 M226.1,191 V168 M234.0,191 V168 M241.8,191 V168 M249.7,191 V168 M257.6,191 V168 M265.4,191 V168 M273.2,191 V168 M281.1,191 V168 M288.9,191 V168 M296.8,191 V168 M304.7,191 V168 M312.5,191 V168 M320.4,191 V168 M328.2,191 V168 M336.1,191 V168 M343.9,191 V168 M351.8,191 V168 M359.6,191 V168 M367.4,191 V168" stroke="#33cc33" stroke-width="6" stroke-linecap="round"/><path d="M375.3,197 V220 M383.2,197 V220 M391.0,197 V220 M398.9,197 V220 M406.7,197 V220 M414.6,197 V220 M438.1,197 V220 M445.9,197 V220 M453.8,197 V220 M461.6,197 V220 M469.5,197 V220 M477.4,197 V220 M485.2,197 V220 M493.1,197 V220 M500.9,197 V220 M508.8,197 V220 M516.6,197 V220 M524.4,197 V220 M532.3,197 V220 M540.1,197 V220 M548.0,197 V220 M555.9,197 V220 M563.7,197 V220 M571.5,197 V220 M579.4,197 V220 M587.2,197 V220 M595.1,197 V220 M603.0,197 V220 M610.8,197 V220 M618.6,197 V220 M626.5,197 V220 M634.4,197 V220 M642.2,197 V220 M650.0,197 V220 M657.9,197 V220 M665.8,197 V220 M673.6,197 V220 M681.5,197 V220 M689.3,197 V220 M697.1,197 V220 M705.0,197 V220 M712.9,197 V220 M720.7,197 V220 M728.5,197 V220 M736.4,197 V220 M744.2,197 V220 M752.1,197 V220 M760.0,197 V220 M767.8,197 V220 M775.6,197 V220 M783.5,197 V220 M791.4,197 V220 M799.2,197 V220 M807.0,197 V220 M814.9,197 V220 M822.8,197 V220" stroke="#ff0000" stroke-width="6" stroke-linecap="round"/><line x1="41" y1="194" x2="826" y2="194" stroke="#ffff00" stroke-width="6"/><path d="M1172.9,191 V168 M1186.1,191 V168 M1199.3,191 V168 M1212.5,191 V168 M1225.7,191 V168 M1238.9,191 V168 M1252.1,191 V168 M1265.3,191 V168 M1278.5,191 V168 M1291.7,191 V168 M1304.9,191 V168 M1318.1,191 V168" stroke="#33cc33" stroke-width="6" stroke-linecap="round"/><path d="M1040.9,197 V220 M1054.1,197 V220 M1067.3,197 V220 M1080.5,197 V220 M1093.7,197 V220 M1106.9,197 V220 M1120.1,197 V220 M1133.3,197 V220 M1146.5,197 V220 M1159.7,197 V220 M1331.3,197 V220 M1344.5,197 V220 M1357.7,197 V220 M1370.9,197 V220 M1384.1,197 V220 M1397.3,197 V220 M1410.5,197 V220 M1423.7,197 V220 M1436.9,197 V220 M1450.1,197 V220 M1463.3,197 V220 M1476.5,197 V220 M1489.7,197 V220 M1502.9,197 V220 M1516.1,197 V220 M1529.3,197 V220 M1542.5,197 V220 M1555.7,197 V220 M1568.9,197 V220 M1582.1,197 V220 M1595.3,197 V220 M1608.5,197 V220 M1621.7,197 V220" stroke="#ff0000" stroke-width="6" stroke-linecap="round"/><line x1="981" y1="194" x2="1700" y2="194" stroke="#ffff00" stroke-width="6" stroke-linecap="round"/><rect x="981" y="191" width="4" height="6" fill="#ffff00"/><line x1="41" y1="287.3" x2="826" y2="287.3" stroke="#ff7020" stroke-width="2"/><line x1="826" y1="290.5" x2="913" y2="290.5" stroke="#ffffff" stroke-width="1"/><path d="M41,263.8 L367.4,263.8 L375.3,314.8 L826,314.8" fill="none" stroke="#8ccfe6" stroke-width="4" stroke-linejoin="round"/><path d="M41.0,290.0 L45.6,290.0 L53.5,306.0 L61.3,306.0 L69.2,306.0 L77.0,290.0 L84.8,290.0 L92.7,290.0 L100.5,290.0 L108.4,290.0 L116.2,290.0 L124.1,275.8 L131.9,290.0 L139.8,290.0 L147.7,275.8 L155.5,290.0 L163.3,290.0 L171.2,290.0 L179.0,290.0 L186.9,290.0 L194.8,290.0 L202.6,290.0 L210.4,290.0 L218.3,290.0 L226.1,290.0 L234.0,290.0 L241.8,290.0 L249.7,290.0 L257.6,290.0 L265.4,290.0 L273.2,290.0 L281.1,290.0 L288.9,290.0 L296.8,290.0 L304.7,275.8 L312.5,290.0 L320.4,290.0 L328.2,290.0 L336.1,290.0 L343.9,290.0 L351.8,290.0 L359.6,290.0 L367.4,290.0 L375.3,290.0 L383.2,290.0 L391.0,290.0 L398.9,290.0 L406.7,290.0 L414.6,290.0 L422.4,273.0 L430.2,290.0 L438.1,303.0 L445.9,290.0 L453.8,290.0 L461.6,290.0 L469.5,290.0 L477.4,303.0 L485.2,290.0 L493.1,290.0 L500.9,290.0 L508.8,290.0 L516.6,290.0 L524.4,290.0 L532.3,290.0 L540.1,303.0 L548.0,290.0 L555.9,290.0 L563.7,290.0 L571.5,290.0 L579.4,290.0 L587.2,290.0 L595.1,290.0 L603.0,290.0 L610.8,290.0 L618.6,290.0 L626.5,303.0 L634.4,290.0 L642.2,290.0 L650.0,290.0 L657.9,303.0 L665.8,290.0 L673.6,290.0 L681.5,290.0 L689.3,290.0 L697.1,290.0 L705.0,303.0 L712.9,290.0 L720.7,290.0 L728.5,290.0 L736.4,290.0 L744.2,290.0 L752.1,290.0 L760.0,290.0 L767.8,290.0 L775.6,290.0 L783.5,290.0 L791.4,290.0 L799.2,290.0 L807.0,303.0 L814.9,290.0 L822.8,290.0 L826.0,290.0" fill="none" stroke="#8ccfe6" stroke-width="4" stroke-linejoin="round"/><line x1="981" y1="287.3" x2="1702" y2="287.3" stroke="#ff7020" stroke-width="2"/><line x1="1702" y1="290.5" x2="1854" y2="290.5" stroke="#ffffff" stroke-width="1"/><path d="M981,314.8 L1159.7,314.8 L1172.9,263.8 L1318.1,263.8 L1331.3,314.8 L1702,314.8" fill="none" stroke="#8ccfe6" stroke-width="4" stroke-linejoin="round"/><path d="M981.0,290.0 L988.1,290.0 L1001.3,290.0 L1014.5,290.0 L1027.7,290.0 L1040.9,304.0 L1054.1,290.0 L1067.3,290.0 L1080.5,290.0 L1093.7,290.0 L1106.9,290.0 L1120.1,290.0 L1133.3,290.0 L1146.5,290.0 L1159.7,290.0 L1172.9,290.0 L1186.1,290.0 L1199.3,290.0 L1212.5,290.0 L1225.7,290.0 L1238.9,290.0 L1252.1,275.8 L1265.3,290.0 L1278.5,290.0 L1291.7,275.8 L1304.9,290.0 L1318.1,290.0 L1331.3,290.0 L1344.5,290.0 L1357.7,290.0 L1370.9,290.0 L1384.1,290.0 L1397.3,290.0 L1410.5,290.0 L1423.7,290.0 L1436.9,290.0 L1450.1,290.0 L1463.3,290.0 L1476.5,290.0 L1489.7,304.0 L1502.9,290.0 L1516.1,290.0 L1529.3,290.0 L1542.5,290.0 L1555.7,290.0 L1568.9,290.0 L1582.1,290.0 L1595.3,290.0 L1608.5,290.0 L1621.7,290.0 L1634.9,272.7 L1648.1,272.7 L1661.3,290.0 L1674.5,290.0 L1687.7,290.0 L1700.9,290.0 L1702.0,290.0" fill="none" stroke="#8ccfe6" stroke-width="4" stroke-linejoin="round"/><line x1="981" y1="485.3" x2="1854" y2="485.3" stroke="#000" stroke-width="1.5" stroke-dasharray="4,4"/><line x1="981" y1="520.3" x2="1854" y2="520.3" stroke="#000" stroke-width="1.5" stroke-dasharray="4,4"/><line x1="981" y1="556.6" x2="1854" y2="556.6" stroke="#000" stroke-width="1.5" stroke-dasharray="4,4"/><line x1="981" y1="592.9" x2="1854" y2="592.9" stroke="#000" stroke-width="1.5" stroke-dasharray="4,4"/><path d="M40.0,455.0 L53.0,460.2 L71.1,477.0 L78.9,490.0 L89.3,500.4 L102.2,508.7 L108.7,506.9 L117.8,512.8 L130.7,508.2 L138.5,508.7 L148.9,505.0 L159.3,495.2 L172.2,481.7 L185.2,483.5 L195.6,484.8 L203.3,495.2 L221.5,505.6 L228.0,512.8 L234.5,512.0 L247.4,515.9 L255.2,518.5 L265.6,531.5 L278.5,543.2 L290.2,553.5 L296.7,549.6 L307.0,539.3 L314.8,523.7 L330.4,515.9 L343.3,509.5 L352.4,504.3 L368.0,508.2 L377.0,521.1 L390.0,540.6 L403.0,545.0 L414.6,548.3 L426.3,543.2 L437.8,543.2 L445.6,546.5 L454.6,547.6 L461.1,538.0 L468.9,534.6 L484.4,539.3 L494.8,549.6 L505.2,554.3 L513.0,553.5 L528.5,543.9 L533.7,543.2 L541.5,548.3 L551.9,562.6 L563.5,569.1 L575.2,563.9 L585.6,559.5 L595.9,549.6 L611.5,539.3 L620.6,538.0 L627.0,544.5 L634.8,535.4 L650.4,528.9 L658.2,531.5 L665.9,552.2 L675.0,567.8 L684.1,565.2 L689.3,566.5 L698.3,554.8 L712.6,563.9 L720.4,565.2 L730.8,584.6 L743.7,602.0 L752.8,596.3 L767.0,560.0 L774.8,557.4 L790.4,563.9 L799.5,565.2 L816.3,595.0 L822.8,592.4" fill="none" stroke="#f0f0d0" stroke-width="1.2" stroke-linejoin="round"/><path d="M40.0,526.3 L55.6,525.8 L68.5,519.8 L78.9,518.0 L88.0,519.0 L99.6,520.6 L117.8,518.5 L125.6,526.3 L138.5,526.3 L151.5,528.9 L174.8,528.9 L185.2,526.3 L195.6,529.4 L200.7,521.1 L221.5,520.6 L231.9,521.1 L242.2,528.9 L255.2,522.4 L263.0,518.5 L288.9,518.0 L309.6,526.3 L325.2,528.9 L345.9,527.6 L358.9,522.4 L374.5,518.5 L392.6,518.5 L403.0,520.6 L413.3,519.8 L423.7,515.9 L440.4,518.0 L450.7,521.1 L458.5,526.3 L471.5,525.8 L479.3,518.5 L505.2,518.5 L513.0,522.4 L524.6,526.3 L538.9,519.8 L549.3,518.5 L567.4,518.5 L575.2,520.6 L590.7,523.7 L598.5,526.3 L611.5,526.3 L621.9,521.1 L627.0,518.5 L632.2,526.3 L637.4,528.9 L645.2,528.4 L655.6,519.8 L676.3,518.5 L689.3,519.8 L699.6,521.1 L704.8,518.5 L715.2,518.5 L723.0,520.6 L730.8,518.5 L746.3,518.5 L756.7,525.0 L767.0,526.3 L774.8,520.6 L793.0,520.6 L803.3,518.5 L822.8,518.0" fill="none" stroke="#e8e800" stroke-width="1.3" stroke-linejoin="round"/><path d="M40.0,521.9 L132.0,521.9 L140.6,529.4 L148.9,521.9 L172.2,521.9 L179.5,529.4 L187.3,521.9 L233.9,521.9 L241.7,529.4 L249.5,521.9 L291.5,521.9 L298.0,510.7 L304.5,521.9 L353.7,521.9 L361.5,528.9 L369.3,521.9 L417.2,521.9 L423.7,510.7 L430.2,521.9 L440.1,521.9 L509.1,521.9 L516.3,496.0 L524.1,521.9 L564.8,521.9 L571.8,496.0 L579.1,521.9 L675.0,521.9 L681.5,508.2 L689.3,521.9 L697.8,508.2 L704.8,521.9 L745.0,521.9 L751.5,496.0 L760.6,521.9 L793.0,521.9 L799.5,515.9 L805.9,521.9 L816.3,521.9 L823.6,508.7" fill="none" stroke="#000" stroke-width="2.2" stroke-linejoin="round"/><path d="M40.0,578.9 L132.0,578.9 L139.8,586.5 L172.2,586.5 L178.7,592.9 L233.9,592.9 L240.9,600.2 L288.9,600.2 L296.7,509.5 L352.4,509.5 L360.2,530.7 L414.6,530.7 L423.7,508.9 L509.1,508.9 L516.9,481.7 L564.3,481.7 L571.3,454.5 L674.2,454.5 L681.5,439.4 L689.3,439.4 L698.3,425.7 L744.5,425.7 L751.5,398.0 L791.7,398.0 L798.7,390.2 L815.8,390.2 L824.1,375.9" fill="none" stroke="#8b0000" stroke-width="4" stroke-linejoin="round"/><path d="M980.0,565.2 L1000.7,561.3 L1024.1,559.5 L1055.2,572.2 L1068.2,570.4 L1086.3,556.1 L1114.8,540.6 L1145.9,512.8 L1171.9,508.7 L1200.4,506.3 L1213.3,508.2 L1226.3,518.5 L1239.3,521.1 L1260.0,522.4 L1291.1,528.9 L1306.7,532.8 L1317.0,543.2 L1330.0,562.6 L1343.0,577.6 L1358.5,577.6 L1368.9,569.1 L1380.0,563.9 L1400.7,557.4 L1424.1,550.2 L1447.4,545.7 L1475.9,540.0 L1514.8,557.4 L1529.1,557.4 L1548.5,575.6 L1566.7,589.8 L1582.2,592.4 L1608.2,601.5 L1635.4,598.9 L1660.0,578.2 L1688.5,550.2 L1701.5,546.5" fill="none" stroke="#f0f0d0" stroke-width="1.2" stroke-linejoin="round"/><path d="M980.0,535.4 L993.0,536.7 L1005.9,536.7 L1026.7,535.4 L1042.2,531.5 L1055.2,531.5 L1068.2,535.4 L1081.1,546.5 L1091.5,543.2 L1104.4,545.7 L1145.9,546.5 L1161.5,543.2 L1174.5,545.7 L1200.4,545.7 L1226.3,535.4 L1241.9,541.3 L1252.2,543.2 L1262.6,540.6 L1293.7,536.7 L1306.7,531.5 L1348.2,531.5 L1358.5,535.4 L1371.5,541.9 L1380.0,540.6 L1411.1,540.6 L1422.8,546.5 L1437.0,540.6 L1452.6,543.9 L1463.0,547.0 L1475.9,540.6 L1488.9,531.5 L1514.8,531.5 L1530.4,535.4 L1540.7,531.5 L1608.2,531.5 L1621.1,534.6 L1636.7,536.7 L1649.6,542.4 L1675.6,546.5 L1688.5,546.5 L1701.5,543.2" fill="none" stroke="#e8e800" stroke-width="1.3" stroke-linejoin="round"/><path d="M980.0,538.5 L1055.2,538.5 L1066.9,530.2 L1078.5,538.5 L1173.2,538.5 L1186.1,554.8 L1199.1,538.5 L1212.0,556.1 L1226.3,538.5 L1357.2,538.5 L1371.5,505.6 L1385.2,538.5 L1608.2,538.5 L1621.6,503.0 L1634.1,538.5 L1701.5,538.5" fill="none" stroke="#000" stroke-width="2.2" stroke-linejoin="round"/><path d="M980.0,385.5 L1055.2,385.5 L1065.6,376.4 L1173.2,376.4 L1184.8,556.1 L1199.1,556.1 L1211.5,575.0 L1355.9,575.0 L1370.2,503.0 L1380.0,503.0 L1608.2,503.0 L1621.1,466.7 L1701.5,466.7" fill="none" stroke="#8b0000" stroke-width="4" stroke-linejoin="round"/><path d="M45.6,717.6 V718.6 M45.6,730.6 V730.6 M61.3,717.1 V723.9 M61.3,725.4 V730.6 M84.8,731.7 V736.4 M84.8,743.1 V743.6 M92.7,724.9 V726.5 M92.7,736.4 V736.9 M108.4,721.2 V721.8 M108.4,736.4 V736.9 M124.1,720.2 V721.8 M124.1,742.1 V745.7 M139.8,720.2 V724.9 M139.8,726.4 V728.5 M147.7,713.4 V714.0 M147.7,724.4 V728.5 M155.5,695.2 V700.4 M155.5,716.0 V717.1 M171.2,685.8 V687.4 M171.2,699.4 V699.9 M186.9,683.2 V691.6 M186.9,693.1 V694.7 M194.8,680.1 V689.8 M194.8,691.3 V693.1 M210.4,694.2 V697.3 M210.4,704.6 V705.6 M234.0,697.6 V700.2 M234.0,708.0 V708.5 M265.4,711.1 V716.1 M265.4,717.6 V724.7 M296.8,717.4 V720.0 M296.8,733.0 V733.5 M304.7,711.7 V712.2 M304.7,721.0 V722.1 M312.5,700.7 V701.2 M312.5,713.2 V715.8 M328.2,695.0 V696.0 M328.2,708.5 V711.7 M343.9,689.8 V695.0 M343.9,699.2 V699.7 M351.8,687.2 V694.0 M351.8,695.5 V698.1 M383.2,711.7 V716.4 M383.2,723.1 V723.6 M398.9,720.0 V721.9 M398.9,723.4 V729.4 M422.4,718.2 V722.4 M422.4,730.2 V730.2 M438.1,726.6 V729.7 M438.1,731.2 V732.3 M453.8,728.6 V729.2 M453.8,738.0 V738.5 M461.6,718.8 V721.4 M461.6,729.2 V729.7 M508.8,743.8 V746.4 M508.8,749.5 V752.1 M516.6,740.1 V741.7 M516.6,745.8 V746.9 M532.3,744.8 V748.7 M532.3,750.2 V751.0 M555.9,769.8 V770.8 M555.9,774.0 V781.8 M587.2,769.3 V770.8 M587.2,777.6 V778.1 M595.1,765.1 V766.7 M595.1,770.3 V774.5 M610.8,755.6 V761.9 M610.8,773.3 V773.9 M634.4,755.6 V760.3 M634.4,786.9 V787.4 M681.5,787.4 V794.2 M681.5,805.6 V808.2 M697.1,782.2 V795.7 M697.1,802.0 V803.0 M736.4,831.2 V837.8 M736.4,839.3 V844.3 M752.1,833.9 V839.1 M752.1,853.1 V853.6 M760.0,819.8 V824.0 M760.0,838.5 V839.1 M791.4,833.3 V839.1 M791.4,846.9 V847.4 M822.8,862.5 V871.4 M822.8,880.7 V880.7" stroke="#8fa8c8" stroke-width="1.5"/><path d="M53.5,709.8 V729.6 M69.2,720.2 V730.6 M77.0,722.3 V744.2 M100.5,725.9 V738.4 M116.2,722.8 V741.6 M131.9,718.1 V731.7 M163.3,696.2 V703.5 M179.0,687.9 V698.3 M202.6,691.0 V703.5 M218.3,695.2 V703.5 M226.1,697.3 V716.0 M241.8,695.5 V708.5 M249.7,688.2 V704.4 M257.6,701.2 V719.5 M273.2,711.1 V722.1 M281.1,714.8 V730.9 M288.9,727.8 V737.2 M320.4,697.1 V709.1 M336.1,695.0 V705.9 M359.6,687.2 V700.7 M367.4,690.8 V700.7 M375.3,697.6 V724.7 M391.0,714.8 V726.8 M406.7,721.0 V730.4 M414.6,725.2 V731.5 M430.2,719.8 V731.2 M445.9,728.1 V739.6 M469.5,720.8 V727.6 M477.4,723.4 V734.4 M485.2,732.8 V738.0 M493.1,734.9 V749.5 M500.9,742.2 V752.1 M524.4,737.0 V752.1 M540.1,744.8 V759.4 M548.0,758.3 V777.1 M563.7,765.6 V778.1 M571.5,767.2 V777.6 M579.4,767.2 V779.7 M603.0,764.6 V774.5 M618.6,760.8 V771.2 M626.5,768.1 V787.9 M642.2,754.6 V769.7 M650.0,765.0 V774.4 M657.9,765.0 V785.8 M665.8,777.5 V809.3 M673.6,788.4 V816.0 M689.3,792.1 V802.0 M705.0,794.7 V812.9 M712.9,803.6 V820.8 M720.7,804.7 V819.8 M728.5,813.0 V845.8 M744.2,834.9 V856.8 M767.8,818.2 V831.8 M775.6,818.8 V843.2 M783.5,834.9 V854.7 M799.2,833.9 V854.7 M807.0,847.4 V880.7 M814.9,870.8 V891.7" stroke="#ff6a1a" stroke-width="1.5"/><rect x="43.4" y="718.6" width="4.5" height="12.0" fill="#000" stroke="#8fa8c8" stroke-width="1.5"/><rect x="58.3" y="723.9" width="6" height="1.5" fill="#8fa8c8"/><rect x="82.6" y="736.4" width="4.5" height="6.8" fill="#000" stroke="#8fa8c8" stroke-width="1.5"/><rect x="90.4" y="726.5" width="4.5" height="9.9" fill="#000" stroke="#8fa8c8" stroke-width="1.5"/><rect x="106.2" y="721.8" width="4.5" height="14.6" fill="#000" stroke="#8fa8c8" stroke-width="1.5"/><rect x="121.8" y="721.8" width="4.5" height="20.3" fill="#000" stroke="#8fa8c8" stroke-width="1.5"/><rect x="136.8" y="724.9" width="6" height="1.5" fill="#8fa8c8"/><rect x="145.4" y="714.0" width="4.5" height="10.4" fill="#000" stroke="#8fa8c8" stroke-width="1.5"/><rect x="153.2" y="700.4" width="4.5" height="15.6" fill="#000" stroke="#8fa8c8" stroke-width="1.5"/><rect x="168.9" y="687.4" width="4.5" height="12.0" fill="#000" stroke="#8fa8c8" stroke-width="1.5"/><rect x="183.9" y="691.6" width="6" height="1.5" fill="#8fa8c8"/><rect x="191.8" y="689.8" width="6" height="1.5" fill="#8fa8c8"/><rect x="208.2" y="697.3" width="4.5" height="7.3" fill="#000" stroke="#8fa8c8" stroke-width="1.5"/><rect x="231.7" y="700.2" width="4.5" height="7.8" fill="#000" stroke="#8fa8c8" stroke-width="1.5"/><rect x="262.4" y="716.1" width="6" height="1.5" fill="#8fa8c8"/><rect x="294.6" y="720.0" width="4.5" height="13.0" fill="#000" stroke="#8fa8c8" stroke-width="1.5"/><rect x="302.4" y="712.2" width="4.5" height="8.9" fill="#000" stroke="#8fa8c8" stroke-width="1.5"/><rect x="310.2" y="701.2" width="4.5" height="12.0" fill="#000" stroke="#8fa8c8" stroke-width="1.5"/><rect x="325.9" y="696.0" width="4.5" height="12.5" fill="#000" stroke="#8fa8c8" stroke-width="1.5"/><rect x="341.7" y="695.0" width="4.5" height="4.2" fill="#000" stroke="#8fa8c8" stroke-width="1.5"/><rect x="348.8" y="694.0" width="6" height="1.5" fill="#8fa8c8"/><rect x="380.9" y="716.4" width="4.5" height="6.8" fill="#000" stroke="#8fa8c8" stroke-width="1.5"/><rect x="395.9" y="721.9" width="6" height="1.5" fill="#8fa8c8"/><rect x="420.1" y="722.4" width="4.5" height="7.8" fill="#000" stroke="#8fa8c8" stroke-width="1.5"/><rect x="435.1" y="729.7" width="6" height="1.5" fill="#8fa8c8"/><rect x="451.6" y="729.2" width="4.5" height="8.9" fill="#000" stroke="#8fa8c8" stroke-width="1.5"/><rect x="459.4" y="721.4" width="4.5" height="7.8" fill="#000" stroke="#8fa8c8" stroke-width="1.5"/><rect x="506.5" y="746.4" width="4.5" height="3.1" fill="#000" stroke="#8fa8c8" stroke-width="1.5"/><rect x="514.4" y="741.7" width="4.5" height="4.2" fill="#000" stroke="#8fa8c8" stroke-width="1.5"/><rect x="529.3" y="748.7" width="6" height="1.5" fill="#8fa8c8"/><rect x="553.6" y="770.8" width="4.5" height="3.1" fill="#000" stroke="#8fa8c8" stroke-width="1.5"/><rect x="585.0" y="770.8" width="4.5" height="6.8" fill="#000" stroke="#8fa8c8" stroke-width="1.5"/><rect x="592.9" y="766.7" width="4.5" height="3.6" fill="#000" stroke="#8fa8c8" stroke-width="1.5"/><rect x="608.5" y="761.9" width="4.5" height="11.5" fill="#000" stroke="#8fa8c8" stroke-width="1.5"/><rect x="632.1" y="760.3" width="4.5" height="26.6" fill="#000" stroke="#8fa8c8" stroke-width="1.5"/><rect x="679.2" y="794.2" width="4.5" height="11.5" fill="#000" stroke="#8fa8c8" stroke-width="1.5"/><rect x="694.9" y="795.7" width="4.5" height="6.2" fill="#000" stroke="#8fa8c8" stroke-width="1.5"/><rect x="733.4" y="837.8" width="6" height="1.5" fill="#8fa8c8"/><rect x="749.9" y="839.1" width="4.5" height="14.1" fill="#000" stroke="#8fa8c8" stroke-width="1.5"/><rect x="757.7" y="824.0" width="4.5" height="14.6" fill="#000" stroke="#8fa8c8" stroke-width="1.5"/><rect x="789.1" y="839.1" width="4.5" height="7.8" fill="#000" stroke="#8fa8c8" stroke-width="1.5"/><rect x="820.5" y="871.4" width="4.5" height="9.4" fill="#000" stroke="#8fa8c8" stroke-width="1.5"/><rect x="50.5" y="720.2" width="6" height="4.2" fill="#ff6a1a"/><rect x="66.2" y="723.4" width="6" height="1.5" fill="#ff6a1a"/><rect x="74.0" y="722.8" width="6" height="20.3" fill="#ff6a1a"/><rect x="97.5" y="726.5" width="6" height="7.8" fill="#ff6a1a"/><rect x="113.2" y="723.9" width="6" height="16.7" fill="#ff6a1a"/><rect x="128.9" y="721.2" width="6" height="3.1" fill="#ff6a1a"/><rect x="160.3" y="698.6" width="6" height="1.5" fill="#ff6a1a"/><rect x="176.0" y="688.4" width="6" height="3.6" fill="#ff6a1a"/><rect x="199.6" y="691.6" width="6" height="11.5" fill="#ff6a1a"/><rect x="215.3" y="696.5" width="6" height="1.5" fill="#ff6a1a"/><rect x="223.1" y="699.4" width="6" height="6.2" fill="#ff6a1a"/><rect x="238.8" y="698.4" width="6" height="1.5" fill="#ff6a1a"/><rect x="246.7" y="699.7" width="6" height="3.6" fill="#ff6a1a"/><rect x="254.6" y="703.3" width="6" height="13.0" fill="#ff6a1a"/><rect x="270.2" y="715.3" width="6" height="2.6" fill="#ff6a1a"/><rect x="278.1" y="720.0" width="6" height="7.3" fill="#ff6a1a"/><rect x="285.9" y="728.9" width="6" height="1.5" fill="#ff6a1a"/><rect x="317.4" y="703.3" width="6" height="5.2" fill="#ff6a1a"/><rect x="333.1" y="696.9" width="6" height="1.5" fill="#ff6a1a"/><rect x="356.6" y="692.9" width="6" height="2.6" fill="#ff6a1a"/><rect x="364.4" y="696.0" width="6" height="4.7" fill="#ff6a1a"/><rect x="372.3" y="701.2" width="6" height="20.8" fill="#ff6a1a"/><rect x="388.0" y="717.4" width="6" height="4.7" fill="#ff6a1a"/><rect x="403.7" y="722.1" width="6" height="4.2" fill="#ff6a1a"/><rect x="411.6" y="726.8" width="6" height="3.1" fill="#ff6a1a"/><rect x="427.2" y="722.4" width="6" height="7.8" fill="#ff6a1a"/><rect x="442.9" y="729.2" width="6" height="7.3" fill="#ff6a1a"/><rect x="466.5" y="721.4" width="6" height="5.2" fill="#ff6a1a"/><rect x="474.4" y="727.6" width="6" height="6.2" fill="#ff6a1a"/><rect x="482.2" y="734.1" width="6" height="1.5" fill="#ff6a1a"/><rect x="490.1" y="735.4" width="6" height="10.4" fill="#ff6a1a"/><rect x="497.9" y="746.1" width="6" height="1.5" fill="#ff6a1a"/><rect x="521.4" y="742.7" width="6" height="6.2" fill="#ff6a1a"/><rect x="537.1" y="750.0" width="6" height="8.3" fill="#ff6a1a"/><rect x="545.0" y="758.9" width="6" height="14.1" fill="#ff6a1a"/><rect x="560.7" y="771.1" width="6" height="1.5" fill="#ff6a1a"/><rect x="568.5" y="769.6" width="6" height="1.5" fill="#ff6a1a"/><rect x="576.4" y="772.4" width="6" height="5.2" fill="#ff6a1a"/><rect x="600.0" y="767.5" width="6" height="1.5" fill="#ff6a1a"/><rect x="615.6" y="762.4" width="6" height="6.2" fill="#ff6a1a"/><rect x="623.5" y="768.6" width="6" height="17.2" fill="#ff6a1a"/><rect x="639.2" y="757.2" width="6" height="11.5" fill="#ff6a1a"/><rect x="647.0" y="768.9" width="6" height="1.5" fill="#ff6a1a"/><rect x="654.9" y="771.2" width="6" height="3.1" fill="#ff6a1a"/><rect x="662.8" y="783.8" width="6" height="22.4" fill="#ff6a1a"/><rect x="670.6" y="804.4" width="6" height="1.5" fill="#ff6a1a"/><rect x="686.3" y="794.2" width="6" height="6.2" fill="#ff6a1a"/><rect x="702.0" y="795.7" width="6" height="13.5" fill="#ff6a1a"/><rect x="709.9" y="805.2" width="6" height="10.4" fill="#ff6a1a"/><rect x="717.7" y="815.4" width="6" height="1.5" fill="#ff6a1a"/><rect x="725.5" y="813.5" width="6" height="26.0" fill="#ff6a1a"/><rect x="741.2" y="838.5" width="6" height="12.5" fill="#ff6a1a"/><rect x="764.8" y="822.2" width="6" height="1.5" fill="#ff6a1a"/><rect x="772.6" y="823.4" width="6" height="18.8" fill="#ff6a1a"/><rect x="780.5" y="842.0" width="6" height="1.5" fill="#ff6a1a"/><rect x="796.2" y="838.5" width="6" height="13.5" fill="#ff6a1a"/><rect x="804.0" y="850.0" width="6" height="20.8" fill="#ff6a1a"/><rect x="811.9" y="871.9" width="6" height="7.8" fill="#ff6a1a"/><path d="M41.0,730.6 L45.2,724.4 L54.1,731.1 L61.9,731.1 L69.2,731.7 L77.0,755.1 L85.8,743.6 L93.1,730.1 L100.4,742.6 L108.8,726.5 L117.1,751.5 L124.4,724.9 L132.2,733.2 L140.0,728.5 L148.3,721.2 L155.6,700.4 L164.0,705.1 L171.8,690.0 L179.6,699.4 L186.9,696.2 L195.2,696.2 L203.0,712.9 L210.8,700.9 L219.2,703.5 L227.0,715.0 L234.2,705.4 L242.5,705.4 L249.8,709.1 L258.1,729.4 L265.4,721.0 L272.7,724.2 L281.6,737.7 L289.4,739.3 L296.7,726.2 L305.5,717.9 L313.3,703.3 L320.6,715.3 L327.9,700.2 L336.8,703.3 L344.6,698.1 L351.9,699.2 L360.2,701.2 L368.0,708.5 L375.8,736.7 L383.1,724.2 L392.0,729.4 L399.3,727.8 L407.1,734.1 L414.4,737.2 L423.1,725.0 L430.9,738.0 L438.2,734.9 L447.1,744.3 L454.4,734.4 L462.2,724.0 L469.5,728.1 L478.3,741.1 L485.6,741.1 L493.4,754.2 L501.8,755.2 L509.6,750.5 L516.9,745.3 L524.7,755.2 L532.5,754.2 L540.8,766.7 L548.6,785.4 L557.0,777.1 L564.8,776.6 L572.1,777.1 L579.4,785.4 L588.2,772.9 L596.0,770.3 L603.3,770.8 L610.6,766.7 L619.4,774.4 L626.7,799.4 L634.5,762.4 L643.3,774.9 L650.6,778.5 L658.4,785.8 L666.2,821.8 L674.6,820.2 L681.9,802.5 L689.7,809.3 L698.0,800.4 L705.8,820.2 L713.5,826.6 L720.8,825.0 L729.7,853.6 L737.0,849.5 L744.8,862.5 L752.1,852.1 L760.9,824.5 L768.2,828.1 L776.0,855.2 L784.4,855.2 L792.2,844.8 L800.0,857.3 L807.3,888.5 L815.6,894.8 L823.4,880.2" fill="none" stroke="#0a9a0a" stroke-width="1.25"/><path d="M41.0,716.6 L45.2,711.4 L54.1,719.2 L61.9,718.6 L69.2,720.2 L77.0,739.0 L85.8,729.6 L93.1,716.6 L100.4,730.6 L108.8,716.6 L117.1,740.0 L124.4,711.4 L132.2,718.1 L140.0,716.6 L148.3,706.7 L155.6,689.5 L164.0,693.1 L171.8,678.5 L179.6,687.4 L186.9,687.4 L195.2,686.4 L203.0,699.4 L210.8,690.0 L219.2,694.7 L227.0,700.9 L234.2,695.0 L242.5,695.0 L249.8,699.2 L257.6,715.8 L265.4,710.1 L272.7,711.7 L281.6,724.2 L289.4,729.4 L293.5,721.0 L297.7,710.6 L305.5,705.4 L313.3,694.0 L320.6,705.4 L327.9,688.8 L336.8,692.9 L344.6,688.8 L351.9,688.8 L360.2,692.4 L368.0,696.0 L375.8,723.1 L383.1,711.7 L392.0,716.4 L399.3,716.4 L407.1,724.7 L414.4,728.9 L423.1,716.1 L430.9,726.0 L438.2,727.1 L447.1,734.4 L454.4,724.5 L462.2,713.5 L469.5,724.0 L478.3,733.3 L485.6,735.4 L493.4,745.8 L501.8,746.9 L509.6,742.7 L516.9,735.9 L524.7,745.8 L532.5,746.4 L540.8,756.2 L548.6,772.9 L557.0,767.7 L564.8,765.1 L572.1,766.1 L579.4,774.5 L588.2,764.6 L596.0,761.5 L603.3,763.5 L610.6,757.8 L619.4,761.9 L626.7,784.8 L634.5,746.8 L643.3,760.8 L650.6,764.5 L658.4,771.2 L666.2,805.6 L674.6,804.1 L681.9,781.7 L689.7,791.0 L698.0,785.8 L705.8,804.6 L713.5,813.5 L720.8,812.0 L729.7,838.5 L737.0,834.4 L744.8,845.8 L752.1,830.2 L760.9,809.9 L768.2,814.6 L776.0,840.1 L784.4,840.1 L792.2,830.2 L800.0,844.8 L807.3,870.8 L815.6,877.1 L823.4,861.5" fill="none" stroke="#ff1a1a" stroke-width="1.25"/><path d="M988.1,727.5 V738.6 M988.1,740.1 V753.1 M1001.3,727.5 V737.8 M1001.3,739.2 V750.6 M1054.1,768.8 V770.6 M1054.1,779.4 V784.4 M1067.3,763.8 V766.9 M1067.3,773.1 V775.6 M1080.5,737.5 V738.8 M1080.5,765.6 V766.2 M1106.9,725.0 V730.6 M1106.9,758.1 V759.4 M1133.3,705.0 V706.2 M1133.3,734.4 V737.5 M1146.5,693.1 V696.2 M1146.5,708.1 V713.8 M1172.9,696.9 V698.8 M1172.9,709.4 V713.8 M1186.1,690.6 V697.8 M1186.1,699.2 V703.8 M1199.3,685.0 V686.2 M1199.3,696.2 V698.1 M1238.9,692.5 V693.8 M1238.9,716.9 V716.9 M1278.5,701.2 V705.5 M1278.5,707.0 V715.6 M1291.7,696.2 V701.9 M1291.7,705.6 V710.6 M1344.5,753.8 V770.2 M1344.5,771.8 V773.1 M1357.7,751.2 V762.5 M1357.7,770.0 V781.9 M1370.9,727.5 V739.4 M1370.9,764.4 V776.9 M1397.3,740.0 V748.1 M1397.3,756.2 V756.9 M1410.5,731.9 V744.4 M1410.5,747.5 V748.1 M1423.7,726.2 V735.6 M1423.7,743.8 V756.9 M1450.1,734.1 V737.8 M1450.1,745.2 V745.9 M1463.3,723.0 V731.9 M1463.3,737.8 V738.5 M1502.9,751.9 V754.1 M1502.9,764.4 V777.0 M1582.1,820.7 V822.2 M1582.1,828.9 V848.1 M1621.7,836.3 V851.1 M1621.7,857.0 V864.4 M1648.1,843.0 V845.2 M1648.1,862.2 V863.0 M1661.3,818.5 V832.6 M1661.3,845.9 V845.9 M1674.5,802.2 V814.1 M1674.5,833.3 V837.0 M1700.9,801.2 V823.0 M1700.9,824.5 V825.2" stroke="#8fa8c8" stroke-width="1.5"/><path d="M1014.5,730.0 V744.4 M1027.7,731.9 V749.4 M1040.9,743.8 V783.1 M1093.7,735.0 V759.4 M1120.1,726.2 V742.5 M1159.7,695.0 V716.9 M1212.5,686.2 V709.4 M1225.7,695.0 V720.6 M1252.1,690.6 V703.1 M1265.3,692.5 V708.1 M1304.9,687.5 V723.8 M1318.1,717.5 V745.6 M1331.3,746.2 V773.1 M1384.1,736.2 V761.9 M1436.9,731.1 V753.3 M1476.5,725.9 V748.9 M1489.7,742.2 V763.7 M1516.1,754.1 V780.0 M1529.3,758.5 V768.9 M1542.5,762.2 V810.4 M1555.7,801.2 V826.7 M1568.9,813.3 V832.6 M1595.3,822.2 V857.0 M1608.5,847.4 V864.4 M1634.9,851.1 V860.7 M1687.7,802.2 V828.1" stroke="#ff6a1a" stroke-width="1.5"/><rect x="983.1" y="738.6" width="10" height="1.5" fill="#8fa8c8"/><rect x="996.3" y="737.8" width="10" height="1.5" fill="#8fa8c8"/><rect x="1049.8" y="770.6" width="8.5" height="8.8" fill="#000" stroke="#8fa8c8" stroke-width="1.5"/><rect x="1063.0" y="766.9" width="8.5" height="6.2" fill="#000" stroke="#8fa8c8" stroke-width="1.5"/><rect x="1076.2" y="738.8" width="8.5" height="26.9" fill="#000" stroke="#8fa8c8" stroke-width="1.5"/><rect x="1102.7" y="730.6" width="8.5" height="27.5" fill="#000" stroke="#8fa8c8" stroke-width="1.5"/><rect x="1129.0" y="706.2" width="8.5" height="28.1" fill="#000" stroke="#8fa8c8" stroke-width="1.5"/><rect x="1142.2" y="696.2" width="8.5" height="11.9" fill="#000" stroke="#8fa8c8" stroke-width="1.5"/><rect x="1168.7" y="698.8" width="8.5" height="10.6" fill="#000" stroke="#8fa8c8" stroke-width="1.5"/><rect x="1181.1" y="697.8" width="10" height="1.5" fill="#8fa8c8"/><rect x="1195.0" y="686.2" width="8.5" height="10.0" fill="#000" stroke="#8fa8c8" stroke-width="1.5"/><rect x="1234.7" y="693.8" width="8.5" height="23.1" fill="#000" stroke="#8fa8c8" stroke-width="1.5"/><rect x="1273.5" y="705.5" width="10" height="1.5" fill="#8fa8c8"/><rect x="1287.5" y="701.9" width="8.5" height="3.8" fill="#000" stroke="#8fa8c8" stroke-width="1.5"/><rect x="1339.5" y="770.2" width="10" height="1.5" fill="#8fa8c8"/><rect x="1353.5" y="762.5" width="8.5" height="7.5" fill="#000" stroke="#8fa8c8" stroke-width="1.5"/><rect x="1366.7" y="739.4" width="8.5" height="25.0" fill="#000" stroke="#8fa8c8" stroke-width="1.5"/><rect x="1393.0" y="748.1" width="8.5" height="8.1" fill="#000" stroke="#8fa8c8" stroke-width="1.5"/><rect x="1406.2" y="744.4" width="8.5" height="3.1" fill="#000" stroke="#8fa8c8" stroke-width="1.5"/><rect x="1419.5" y="735.6" width="8.5" height="8.1" fill="#000" stroke="#8fa8c8" stroke-width="1.5"/><rect x="1445.8" y="737.8" width="8.5" height="7.4" fill="#000" stroke="#8fa8c8" stroke-width="1.5"/><rect x="1459.0" y="731.9" width="8.5" height="5.9" fill="#000" stroke="#8fa8c8" stroke-width="1.5"/><rect x="1498.7" y="754.1" width="8.5" height="10.4" fill="#000" stroke="#8fa8c8" stroke-width="1.5"/><rect x="1577.8" y="822.2" width="8.5" height="6.7" fill="#000" stroke="#8fa8c8" stroke-width="1.5"/><rect x="1617.4" y="851.1" width="8.5" height="5.9" fill="#000" stroke="#8fa8c8" stroke-width="1.5"/><rect x="1643.8" y="845.2" width="8.5" height="17.0" fill="#000" stroke="#8fa8c8" stroke-width="1.5"/><rect x="1657.0" y="832.6" width="8.5" height="13.3" fill="#000" stroke="#8fa8c8" stroke-width="1.5"/><rect x="1670.2" y="814.1" width="8.5" height="19.3" fill="#000" stroke="#8fa8c8" stroke-width="1.5"/><rect x="1695.9" y="823.0" width="10" height="1.5" fill="#8fa8c8"/><rect x="1009.5" y="737.5" width="10" height="5.6" fill="#ff6a1a"/><rect x="1022.7" y="744.4" width="10" height="2.5" fill="#ff6a1a"/><rect x="1035.9" y="747.5" width="10" height="29.4" fill="#ff6a1a"/><rect x="1088.7" y="738.8" width="10" height="17.5" fill="#ff6a1a"/><rect x="1115.1" y="731.2" width="10" height="4.4" fill="#ff6a1a"/><rect x="1154.7" y="696.2" width="10" height="11.9" fill="#ff6a1a"/><rect x="1207.5" y="686.2" width="10" height="9.4" fill="#ff6a1a"/><rect x="1220.7" y="697.5" width="10" height="18.1" fill="#ff6a1a"/><rect x="1247.1" y="693.8" width="10" height="5.6" fill="#ff6a1a"/><rect x="1260.3" y="700.0" width="10" height="4.4" fill="#ff6a1a"/><rect x="1299.9" y="700.0" width="10" height="23.1" fill="#ff6a1a"/><rect x="1313.1" y="723.8" width="10" height="21.9" fill="#ff6a1a"/><rect x="1326.3" y="747.5" width="10" height="23.1" fill="#ff6a1a"/><rect x="1379.1" y="738.8" width="10" height="10.6" fill="#ff6a1a"/><rect x="1431.9" y="734.8" width="10" height="9.6" fill="#ff6a1a"/><rect x="1471.5" y="731.1" width="10" height="14.8" fill="#ff6a1a"/><rect x="1484.7" y="745.9" width="10" height="17.8" fill="#ff6a1a"/><rect x="1511.1" y="754.8" width="10" height="10.4" fill="#ff6a1a"/><rect x="1524.3" y="765.2" width="10" height="1.5" fill="#ff6a1a"/><rect x="1537.5" y="768.1" width="10" height="35.6" fill="#ff6a1a"/><rect x="1550.7" y="803.7" width="10" height="18.5" fill="#ff6a1a"/><rect x="1563.9" y="824.4" width="10" height="1.5" fill="#ff6a1a"/><rect x="1590.3" y="825.2" width="10" height="29.6" fill="#ff6a1a"/><rect x="1603.5" y="854.1" width="10" height="1.5" fill="#ff6a1a"/><rect x="1629.9" y="851.1" width="10" height="9.6" fill="#ff6a1a"/><rect x="1682.7" y="812.6" width="10" height="10.4" fill="#ff6a1a"/><path d="M981.2,751.9 L988.1,750.6 L1000.6,748.8 L1013.8,753.8 L1026.9,756.2 L1040.9,795.0 L1054.4,778.8 L1067.5,771.9 L1080.6,740.0 L1093.5,768.1 L1106.9,734.4 L1119.4,745.0 L1133.1,706.9 L1145.6,701.9 L1159.4,720.6 L1173.1,707.5 L1185.6,705.0 L1199.4,690.6 L1212.5,708.8 L1225.6,731.2 L1238.1,699.4 L1251.9,708.1 L1264.8,715.6 L1278.5,713.8 L1291.9,705.6 L1304.6,731.2 L1318.1,755.0 L1331.0,790.0 L1344.4,782.5 L1357.2,771.2 L1371.0,743.1 L1384.0,763.8 L1397.5,761.2 L1410.2,755.0 L1423.5,741.9 L1436.7,754.8 L1450.0,745.2 L1462.9,737.0 L1475.9,757.8 L1489.7,777.8 L1503.0,763.0 L1515.9,779.3 L1529.3,777.8 L1542.3,825.2 L1555.6,843.7 L1568.5,841.5 L1581.9,834.8 L1594.9,874.1 L1608.5,871.1 L1621.9,860.7 L1634.9,871.9 L1647.8,853.3 L1661.1,837.0 L1674.4,817.0 L1687.5,834.8 L1699.6,834.1" fill="none" stroke="#0a9a0a" stroke-width="1.25"/><path d="M981.2,731.2 L988.1,730.6 L1000.6,727.5 L1013.8,734.4 L1026.9,741.2 L1040.9,777.5 L1054.4,768.8 L1067.5,755.6 L1080.6,721.2 L1093.5,752.5 L1106.9,715.6 L1119.4,726.2 L1133.1,686.9 L1145.6,681.2 L1159.4,700.0 L1173.1,690.0 L1185.6,690.0 L1199.4,676.2 L1212.5,691.9 L1225.6,715.6 L1238.1,683.1 L1251.9,690.6 L1264.8,700.0 L1278.5,700.0 L1291.9,693.8 L1304.6,717.5 L1318.1,745.0 L1331.0,770.0 L1344.4,760.0 L1357.2,750.0 L1371.0,718.1 L1384.0,738.1 L1397.5,735.0 L1410.2,732.5 L1423.5,724.4 L1436.7,737.8 L1450.0,728.9 L1462.9,722.2 L1475.9,739.3 L1489.7,763.7 L1503.0,746.7 L1515.9,760.0 L1529.3,762.2 L1542.3,804.4 L1555.6,822.2 L1568.5,821.5 L1581.9,810.4 L1594.9,854.1 L1608.5,853.3 L1621.9,840.7 L1634.9,850.4 L1647.8,835.6 L1661.1,817.8 L1674.4,797.0 L1687.5,813.3 L1699.6,811.9" fill="none" stroke="#ff1a1a" stroke-width="1.25"/><line x1="438.3" y1="257" x2="438.3" y2="320.8" stroke="#e81010" stroke-width="1.4"/><line x1="438.3" y1="353.3" x2="438.3" y2="624.7" stroke="#e81010" stroke-width="1.4"/><line x1="438.3" y1="657" x2="438.3" y2="916" stroke="#e81010" stroke-width="1.4"/><line x1="1634.6" y1="257" x2="1634.6" y2="320.8" stroke="#f0f000" stroke-width="1.5"/><line x1="1819.5" y1="257" x2="1819.5" y2="320.8" stroke="#e81818" stroke-width="2" stroke-dasharray="4,4"/><line x1="1634.6" y1="353.3" x2="1634.6" y2="624.7" stroke="#f0f000" stroke-width="1.5"/><line x1="1819.5" y1="353.3" x2="1819.5" y2="624.7" stroke="#e81818" stroke-width="2" stroke-dasharray="4,4"/><line x1="1634.6" y1="657" x2="1634.6" y2="896" stroke="#f0f000" stroke-width="1.5"/><line x1="1819.5" y1="657" x2="1819.5" y2="896" stroke="#e81818" stroke-width="2" stroke-dasharray="4,4"/></g></svg><svg style="position:absolute;left:0;top:0" width="1920" height="1080"><g font-family="Liberation Sans" font-size="15" fill="#f0f0f0"><line x1="913.5" y1="162.5" x2="913.5" y2="224.8" stroke="#f0f0f0" stroke-width="1.3"/><line x1="913" y1="168.5" x2="924" y2="168.5" stroke="#f0f0f0" stroke-width="1.3"/><line x1="913" y1="194.0" x2="924" y2="194.0" stroke="#f0f0f0" stroke-width="1.3"/><line x1="913" y1="220.0" x2="924" y2="220.0" stroke="#f0f0f0" stroke-width="1.3"/><line x1="913" y1="181.0" x2="918" y2="181.0" stroke="#f0f0f0" stroke-width="1.3"/><line x1="913" y1="207.0" x2="918" y2="207.0" stroke="#f0f0f0" stroke-width="1.3"/><text x="971" y="201.2" text-anchor="end">0</text><line x1="913.5" y1="257" x2="913.5" y2="320.8" stroke="#f0f0f0" stroke-width="1.3"/><line x1="913" y1="273.0" x2="924" y2="273.0" stroke="#f0f0f0" stroke-width="1.3"/><line x1="913" y1="290.0" x2="924" y2="290.0" stroke="#f0f0f0" stroke-width="1.3"/><line x1="913" y1="307.0" x2="924" y2="307.0" stroke="#f0f0f0" stroke-width="1.3"/><line x1="913" y1="264.5" x2="918" y2="264.5" stroke="#f0f0f0" stroke-width="1.3"/><line x1="913" y1="281.5" x2="918" y2="281.5" stroke="#f0f0f0" stroke-width="1.3"/><line x1="913" y1="298.5" x2="918" y2="298.5" stroke="#f0f0f0" stroke-width="1.3"/><line x1="913" y1="315.5" x2="918" y2="315.5" stroke="#f0f0f0" stroke-width="1.3"/><text x="971" y="278.7" text-anchor="end">1000</text><text x="971" y="295.7" text-anchor="end">0</text><text x="971" y="312.2" text-anchor="end">-1000</text><line x1="1853.5" y1="162.5" x2="1853.5" y2="224.8" stroke="#f0f0f0" stroke-width="1.3"/><line x1="1853" y1="168.5" x2="1864" y2="168.5" stroke="#f0f0f0" stroke-width="1.3"/><line x1="1853" y1="194.0" x2="1864" y2="194.0" stroke="#f0f0f0" stroke-width="1.3"/><line x1="1853" y1="220.0" x2="1864" y2="220.0" stroke="#f0f0f0" stroke-width="1.3"/><line x1="1853" y1="181.0" x2="1858" y2="181.0" stroke="#f0f0f0" stroke-width="1.3"/><line x1="1853" y1="207.0" x2="1858" y2="207.0" stroke="#f0f0f0" stroke-width="1.3"/><text x="1911" y="201.2" text-anchor="end">0</text><line x1="1853.5" y1="257" x2="1853.5" y2="320.8" stroke="#f0f0f0" stroke-width="1.3"/><line x1="1853" y1="273.0" x2="1864" y2="273.0" stroke="#f0f0f0" stroke-width="1.3"/><line x1="1853" y1="290.0" x2="1864" y2="290.0" stroke="#f0f0f0" stroke-width="1.3"/><line x1="1853" y1="307.0" x2="1864" y2="307.0" stroke="#f0f0f0" stroke-width="1.3"/><line x1="1853" y1="264.5" x2="1858" y2="264.5" stroke="#f0f0f0" stroke-width="1.3"/><line x1="1853" y1="281.5" x2="1858" y2="281.5" stroke="#f0f0f0" stroke-width="1.3"/><line x1="1853" y1="298.5" x2="1858" y2="298.5" stroke="#f0f0f0" stroke-width="1.3"/><line x1="1853" y1="315.5" x2="1858" y2="315.5" stroke="#f0f0f0" stroke-width="1.3"/><text x="1911" y="278.7" text-anchor="end">1000</text><text x="1911" y="295.7" text-anchor="end">0</text><text x="1911" y="312.2" text-anchor="end">-1000</text><line x1="913.5" y1="353.3" x2="913.5" y2="624.7" stroke="#f0f0f0" stroke-width="1.3"/><line x1="913" y1="383.7" x2="924" y2="383.7" stroke="#f0f0f0" stroke-width="1.3"/><line x1="913" y1="453.2" x2="924" y2="453.2" stroke="#f0f0f0" stroke-width="1.3"/><line x1="913" y1="522.7" x2="924" y2="522.7" stroke="#f0f0f0" stroke-width="1.3"/><line x1="913" y1="592.2" x2="924" y2="592.2" stroke="#f0f0f0" stroke-width="1.3"/><line x1="913" y1="620.0" x2="918" y2="620.0" stroke="#f0f0f0" stroke-width="1.3"/><line x1="913" y1="606.1" x2="918" y2="606.1" stroke="#f0f0f0" stroke-width="1.3"/><line x1="913" y1="578.3" x2="918" y2="578.3" stroke="#f0f0f0" stroke-width="1.3"/><line x1="913" y1="564.4" x2="918" y2="564.4" stroke="#f0f0f0" stroke-width="1.3"/><line x1="913" y1="550.5" x2="918" y2="550.5" stroke="#f0f0f0" stroke-width="1.3"/><line x1="913" y1="536.6" x2="918" y2="536.6" stroke="#f0f0f0" stroke-width="1.3"/><line x1="913" y1="508.8" x2="918" y2="508.8" stroke="#f0f0f0" stroke-width="1.3"/><line x1="913" y1="494.9" x2="918" y2="494.9" stroke="#f0f0f0" stroke-width="1.3"/><line x1="913" y1="481.0" x2="918" y2="481.0" stroke="#f0f0f0" stroke-width="1.3"/><line x1="913" y1="467.1" x2="918" y2="467.1" stroke="#f0f0f0" stroke-width="1.3"/><line x1="913" y1="439.3" x2="918" y2="439.3" stroke="#f0f0f0" stroke-width="1.3"/><line x1="913" y1="425.4" x2="918" y2="425.4" stroke="#f0f0f0" stroke-width="1.3"/><line x1="913" y1="411.5" x2="918" y2="411.5" stroke="#f0f0f0" stroke-width="1.3"/><line x1="913" y1="397.6" x2="918" y2="397.6" stroke="#f0f0f0" stroke-width="1.3"/><line x1="913" y1="369.8" x2="918" y2="369.8" stroke="#f0f0f0" stroke-width="1.3"/><line x1="913" y1="355.9" x2="918" y2="355.9" stroke="#f0f0f0" stroke-width="1.3"/><text x="971" y="389.9" text-anchor="end">100</text><text x="971" y="459.4" text-anchor="end">50</text><text x="971" y="528.9" text-anchor="end">0</text><text x="971" y="598.4" text-anchor="end">-50</text><line x1="1853.5" y1="353.3" x2="1853.5" y2="624.7" stroke="#f0f0f0" stroke-width="1.3"/><line x1="1853" y1="610.2" x2="1864" y2="610.2" stroke="#f0f0f0" stroke-width="1.3"/><line x1="1853" y1="592.2" x2="1864" y2="592.2" stroke="#f0f0f0" stroke-width="1.3"/><line x1="1853" y1="574.3" x2="1864" y2="574.3" stroke="#f0f0f0" stroke-width="1.3"/><line x1="1853" y1="556.4" x2="1864" y2="556.4" stroke="#f0f0f0" stroke-width="1.3"/><line x1="1853" y1="538.5" x2="1864" y2="538.5" stroke="#f0f0f0" stroke-width="1.3"/><line x1="1853" y1="520.5" x2="1864" y2="520.5" stroke="#f0f0f0" stroke-width="1.3"/><line x1="1853" y1="502.6" x2="1864" y2="502.6" stroke="#f0f0f0" stroke-width="1.3"/><line x1="1853" y1="484.7" x2="1864" y2="484.7" stroke="#f0f0f0" stroke-width="1.3"/><line x1="1853" y1="466.7" x2="1864" y2="466.7" stroke="#f0f0f0" stroke-width="1.3"/><line x1="1853" y1="448.8" x2="1864" y2="448.8" stroke="#f0f0f0" stroke-width="1.3"/><line x1="1853" y1="430.9" x2="1864" y2="430.9" stroke="#f0f0f0" stroke-width="1.3"/><line x1="1853" y1="412.9" x2="1864" y2="412.9" stroke="#f0f0f0" stroke-width="1.3"/><line x1="1853" y1="395.0" x2="1864" y2="395.0" stroke="#f0f0f0" stroke-width="1.3"/><line x1="1853" y1="377.1" x2="1864" y2="377.1" stroke="#f0f0f0" stroke-width="1.3"/><line x1="1853" y1="359.1" x2="1864" y2="359.1" stroke="#f0f0f0" stroke-width="1.3"/><line x1="1853" y1="610.2" x2="1858" y2="610.2" stroke="#f0f0f0" stroke-width="1.3"/><line x1="1853" y1="592.2" x2="1858" y2="592.2" stroke="#f0f0f0" stroke-width="1.3"/><line x1="1853" y1="574.3" x2="1858" y2="574.3" stroke="#f0f0f0" stroke-width="1.3"/><line x1="1853" y1="556.4" x2="1858" y2="556.4" stroke="#f0f0f0" stroke-width="1.3"/><line x1="1853" y1="538.5" x2="1858" y2="538.5" stroke="#f0f0f0" stroke-width="1.3"/><line x1="1853" y1="520.5" x2="1858" y2="520.5" stroke="#f0f0f0" stroke-width="1.3"/><line x1="1853" y1="502.6" x2="1858" y2="502.6" stroke="#f0f0f0" stroke-width="1.3"/><line x1="1853" y1="484.7" x2="1858" y2="484.7" stroke="#f0f0f0" stroke-width="1.3"/><line x1="1853" y1="466.7" x2="1858" y2="466.7" stroke="#f0f0f0" stroke-width="1.3"/><line x1="1853" y1="448.8" x2="1858" y2="448.8" stroke="#f0f0f0" stroke-width="1.3"/><line x1="1853" y1="430.9" x2="1858" y2="430.9" stroke="#f0f0f0" stroke-width="1.3"/><line x1="1853" y1="412.9" x2="1858" y2="412.9" stroke="#f0f0f0" stroke-width="1.3"/><line x1="1853" y1="395.0" x2="1858" y2="395.0" stroke="#f0f0f0" stroke-width="1.3"/><line x1="1853" y1="377.1" x2="1858" y2="377.1" stroke="#f0f0f0" stroke-width="1.3"/><line x1="1853" y1="359.1" x2="1858" y2="359.1" stroke="#f0f0f0" stroke-width="1.3"/><text x="1911" y="383.8" text-anchor="end">90</text><text x="1911" y="401.7" text-anchor="end">80</text><text x="1911" y="419.6" text-anchor="end">70</text><text x="1911" y="437.6" text-anchor="end">60</text><text x="1911" y="455.5" text-anchor="end">50</text><text x="1911" y="473.4" text-anchor="end">40</text><text x="1911" y="491.4" text-anchor="end">30</text><text x="1911" y="509.3" text-anchor="end">20</text><text x="1911" y="527.2" text-anchor="end">10</text><text x="1911" y="545.2" text-anchor="end">0</text><text x="1911" y="563.1" text-anchor="end">-10</text><text x="1911" y="581.0" text-anchor="end">-20</text><text x="1911" y="598.9" text-anchor="end">-30</text><text x="1911" y="616.9" text-anchor="end">-40</text><line x1="913.5" y1="657" x2="913.5" y2="916" stroke="#f0f0f0" stroke-width="1.3"/><line x1="913" y1="887.5" x2="924" y2="887.5" stroke="#f0f0f0" stroke-width="1.3"/><line x1="913" y1="843.3" x2="924" y2="843.3" stroke="#f0f0f0" stroke-width="1.3"/><line x1="913" y1="799.2" x2="924" y2="799.2" stroke="#f0f0f0" stroke-width="1.3"/><line x1="913" y1="755.1" x2="924" y2="755.1" stroke="#f0f0f0" stroke-width="1.3"/><line x1="913" y1="710.9" x2="924" y2="710.9" stroke="#f0f0f0" stroke-width="1.3"/><line x1="913" y1="666.8" x2="924" y2="666.8" stroke="#f0f0f0" stroke-width="1.3"/><line x1="913" y1="905.2" x2="918" y2="905.2" stroke="#f0f0f0" stroke-width="1.3"/><line x1="913" y1="896.3" x2="918" y2="896.3" stroke="#f0f0f0" stroke-width="1.3"/><line x1="913" y1="878.7" x2="918" y2="878.7" stroke="#f0f0f0" stroke-width="1.3"/><line x1="913" y1="869.8" x2="918" y2="869.8" stroke="#f0f0f0" stroke-width="1.3"/><line x1="913" y1="861.0" x2="918" y2="861.0" stroke="#f0f0f0" stroke-width="1.3"/><line x1="913" y1="852.2" x2="918" y2="852.2" stroke="#f0f0f0" stroke-width="1.3"/><line x1="913" y1="834.5" x2="918" y2="834.5" stroke="#f0f0f0" stroke-width="1.3"/><line x1="913" y1="825.7" x2="918" y2="825.7" stroke="#f0f0f0" stroke-width="1.3"/><line x1="913" y1="816.9" x2="918" y2="816.9" stroke="#f0f0f0" stroke-width="1.3"/><line x1="913" y1="808.0" x2="918" y2="808.0" stroke="#f0f0f0" stroke-width="1.3"/><line x1="913" y1="790.4" x2="918" y2="790.4" stroke="#f0f0f0" stroke-width="1.3"/><line x1="913" y1="781.5" x2="918" y2="781.5" stroke="#f0f0f0" stroke-width="1.3"/><line x1="913" y1="772.7" x2="918" y2="772.7" stroke="#f0f0f0" stroke-width="1.3"/><line x1="913" y1="763.9" x2="918" y2="763.9" stroke="#f0f0f0" stroke-width="1.3"/><line x1="913" y1="746.2" x2="918" y2="746.2" stroke="#f0f0f0" stroke-width="1.3"/><line x1="913" y1="737.4" x2="918" y2="737.4" stroke="#f0f0f0" stroke-width="1.3"/><line x1="913" y1="728.6" x2="918" y2="728.6" stroke="#f0f0f0" stroke-width="1.3"/><line x1="913" y1="719.7" x2="918" y2="719.7" stroke="#f0f0f0" stroke-width="1.3"/><line x1="913" y1="702.1" x2="918" y2="702.1" stroke="#f0f0f0" stroke-width="1.3"/><line x1="913" y1="693.2" x2="918" y2="693.2" stroke="#f0f0f0" stroke-width="1.3"/><line x1="913" y1="684.4" x2="918" y2="684.4" stroke="#f0f0f0" stroke-width="1.3"/><line x1="913" y1="675.6" x2="918" y2="675.6" stroke="#f0f0f0" stroke-width="1.3"/><text x="971" y="717.1" text-anchor="end">1.20</text><text x="971" y="761.3" text-anchor="end">1.15</text><text x="971" y="805.4" text-anchor="end">1.10</text><text x="971" y="849.5" text-anchor="end">1.05</text><text x="971" y="893.7" text-anchor="end">1.00</text><line x1="1853.5" y1="657" x2="1853.5" y2="896" stroke="#f0f0f0" stroke-width="1.3"/><line x1="1853" y1="888.0" x2="1864" y2="888.0" stroke="#f0f0f0" stroke-width="1.3"/><line x1="1853" y1="865.1" x2="1864" y2="865.1" stroke="#f0f0f0" stroke-width="1.3"/><line x1="1853" y1="842.2" x2="1864" y2="842.2" stroke="#f0f0f0" stroke-width="1.3"/><line x1="1853" y1="819.3" x2="1864" y2="819.3" stroke="#f0f0f0" stroke-width="1.3"/><line x1="1853" y1="796.4" x2="1864" y2="796.4" stroke="#f0f0f0" stroke-width="1.3"/><line x1="1853" y1="773.5" x2="1864" y2="773.5" stroke="#f0f0f0" stroke-width="1.3"/><line x1="1853" y1="750.7" x2="1864" y2="750.7" stroke="#f0f0f0" stroke-width="1.3"/><line x1="1853" y1="727.8" x2="1864" y2="727.8" stroke="#f0f0f0" stroke-width="1.3"/><line x1="1853" y1="704.9" x2="1864" y2="704.9" stroke="#f0f0f0" stroke-width="1.3"/><line x1="1853" y1="682.0" x2="1864" y2="682.0" stroke="#f0f0f0" stroke-width="1.3"/><line x1="1853" y1="659.1" x2="1864" y2="659.1" stroke="#f0f0f0" stroke-width="1.3"/><line x1="1853" y1="899.4" x2="1858" y2="899.4" stroke="#f0f0f0" stroke-width="1.3"/><line x1="1853" y1="876.6" x2="1858" y2="876.6" stroke="#f0f0f0" stroke-width="1.3"/><line x1="1853" y1="853.7" x2="1858" y2="853.7" stroke="#f0f0f0" stroke-width="1.3"/><line x1="1853" y1="830.8" x2="1858" y2="830.8" stroke="#f0f0f0" stroke-width="1.3"/><line x1="1853" y1="807.9" x2="1858" y2="807.9" stroke="#f0f0f0" stroke-width="1.3"/><line x1="1853" y1="785.0" x2="1858" y2="785.0" stroke="#f0f0f0" stroke-width="1.3"/><line x1="1853" y1="762.1" x2="1858" y2="762.1" stroke="#f0f0f0" stroke-width="1.3"/><line x1="1853" y1="739.2" x2="1858" y2="739.2" stroke="#f0f0f0" stroke-width="1.3"/><line x1="1853" y1="716.3" x2="1858" y2="716.3" stroke="#f0f0f0" stroke-width="1.3"/><line x1="1853" y1="693.4" x2="1858" y2="693.4" stroke="#f0f0f0" stroke-width="1.3"/><line x1="1853" y1="670.5" x2="1858" y2="670.5" stroke="#f0f0f0" stroke-width="1.3"/><text x="1911" y="688.2" text-anchor="end">1.08</text><text x="1911" y="711.1" text-anchor="end">1.07</text><text x="1911" y="734.0" text-anchor="end">1.06</text><text x="1911" y="756.9" text-anchor="end">1.05</text><text x="1911" y="779.8" text-anchor="end">1.04</text><text x="1911" y="802.6" text-anchor="end">1.03</text><text x="1911" y="848.4" text-anchor="end">1.01</text><text x="1911" y="871.3" text-anchor="end">1.00</text><text x="1911" y="894.2" text-anchor="end">0.99</text></g><rect x="918.5" y="861" width="52" height="20" fill="#000" stroke="#e8e8e8" stroke-width="1.3"/><text x="944.5" y="876" text-anchor="middle" font-family="Liberation Sans" font-size="14" fill="#00e000">1.01820</text><rect x="1858" y="811.5" width="53" height="22" fill="#000" stroke="#e8e8e8" stroke-width="1.3"/><text x="1884.5" y="827.5" text-anchor="middle" font-family="Liberation Sans" font-size="14" fill="#00e000">1.01820</text><rect x="41" y="916" width="936" height="3.5" fill="#ececec"/><rect x="41" y="919.3" width="872" height="20.7" fill="#000"/><rect x="41" y="940" width="872" height="1.5" fill="#505050"/><g font-family="Liberation Sans" font-size="15.6" fill="#f0f0f0"><rect x="53.7" y="919.3" width="1.2" height="20.7" fill="#d8d8d8"/><text x="56.2" y="935.5">Sep</text><rect x="85.0" y="919.3" width="1.2" height="20.7" fill="#d8d8d8"/><rect x="123.8" y="919.3" width="1.2" height="20.7" fill="#d8d8d8"/><text x="126.3" y="935.5">Nov</text><rect x="154.7" y="919.3" width="1.2" height="20.7" fill="#d8d8d8"/><text x="157.2" y="935.5">Dec</text><rect x="186.3" y="919.3" width="1.2" height="20.7" fill="#d8d8d8"/><text x="188.8" y="935.5">2021</text><rect x="225.7" y="919.3" width="1.2" height="20.7" fill="#d8d8d8"/><rect x="257.8" y="919.3" width="1.2" height="20.7" fill="#d8d8d8"/><text x="260.3" y="935.5">Mar</text><rect x="288.7" y="919.3" width="1.2" height="20.7" fill="#d8d8d8"/><text x="291.2" y="935.5">Apr</text><rect x="327.7" y="919.3" width="1.2" height="20.7" fill="#d8d8d8"/><text x="330.2" y="935.5">May</text><rect x="359.7" y="919.3" width="1.2" height="20.7" fill="#d8d8d8"/><text x="362.2" y="935.5">Jun</text><rect x="390.7" y="919.3" width="1.2" height="20.7" fill="#d8d8d8"/><text x="393.2" y="935.5">Jul</text><rect x="429.6" y="919.3" width="1.2" height="20.7" fill="#d8d8d8"/><text x="432.1" y="935.5">Aug</text><rect x="460.6" y="919.3" width="1.2" height="20.7" fill="#d8d8d8"/><text x="463.1" y="935.5">Sep</text><rect x="492.3" y="919.3" width="1.2" height="20.7" fill="#d8d8d8"/><rect x="532.3" y="919.3" width="1.2" height="20.7" fill="#d8d8d8"/><text x="534.8" y="935.5">Nov</text><rect x="563.7" y="919.3" width="1.2" height="20.7" fill="#d8d8d8"/><text x="566.2" y="935.5">Dec</text><rect x="602.5" y="919.3" width="1.2" height="20.7" fill="#d8d8d8"/><text x="605.0" y="935.5">2022</text><rect x="664.8" y="919.3" width="1.2" height="20.7" fill="#d8d8d8"/><text x="667.3" y="935.5">Mar</text><rect x="697.1" y="919.3" width="1.2" height="20.7" fill="#d8d8d8"/><text x="699.6" y="935.5">Apr</text><rect x="735.9" y="919.3" width="1.2" height="20.7" fill="#d8d8d8"/><text x="738.4" y="935.5">May</text><rect x="767.3" y="919.3" width="1.2" height="20.7" fill="#d8d8d8"/><text x="769.8" y="935.5">Jun</text><rect x="798.9" y="919.3" width="1.2" height="20.7" fill="#d8d8d8"/><text x="801.4" y="935.5">Jul</text><rect x="838.5" y="919.3" width="1.2" height="20.7" fill="#d8d8d8"/><text x="841.0" y="935.5">Aug</text><rect x="870.1" y="919.3" width="1.2" height="20.7" fill="#d8d8d8"/><text x="872.6" y="935.5">Sep</text><rect x="909.1" y="919.3" width="1.2" height="20.7" fill="#d8d8d8"/><text x="40" y="935.5">g</text></g><rect x="981" y="896" width="936" height="3.6" fill="#ececec"/><rect x="981" y="899.6" width="873" height="19" fill="#000"/><rect x="981" y="918.6" width="873" height="1.4" fill="#c8c8c8"/><rect x="981" y="920" width="873" height="18.5" fill="#000"/><rect x="981" y="938.3" width="873" height="2" fill="#484848"/><g font-family="Liberation Sans" font-size="15.6" fill="#f0f0f0"><rect x="1000.2" y="899.6" width="1.2" height="19" fill="#d8d8d8"/><text x="1002.7" y="914.5">9</text><rect x="1066.0" y="899.6" width="1.2" height="19" fill="#d8d8d8"/><text x="1068.5" y="914.5">16</text><rect x="1132.5" y="899.6" width="1.2" height="19" fill="#d8d8d8"/><text x="1135.0" y="914.5">23</text><rect x="1198.9" y="899.6" width="1.2" height="19" fill="#d8d8d8"/><text x="1201.4" y="914.5">30</text><rect x="1225.3" y="899.6" width="1.2" height="19" fill="#d8d8d8"/><rect x="1263.8" y="899.6" width="1.2" height="19" fill="#d8d8d8"/><text x="1266.3" y="914.5">6</text><rect x="1330.2" y="899.6" width="1.2" height="19" fill="#d8d8d8"/><text x="1332.7" y="914.5">13</text><rect x="1396.7" y="899.6" width="1.2" height="19" fill="#d8d8d8"/><text x="1399.2" y="914.5">20</text><rect x="1462.7" y="899.6" width="1.2" height="19" fill="#d8d8d8"/><text x="1465.2" y="914.5">27</text><rect x="1515.2" y="899.6" width="1.2" height="19" fill="#d8d8d8"/><rect x="1528.9" y="899.6" width="1.2" height="19" fill="#d8d8d8"/><text x="1531.4" y="914.5">4</text><rect x="1594.0" y="899.6" width="1.2" height="19" fill="#d8d8d8"/><text x="1596.5" y="914.5">11</text><rect x="1660.1" y="899.6" width="1.2" height="19" fill="#d8d8d8"/><text x="1662.6" y="914.5">18</text><rect x="1726.5" y="899.6" width="1.2" height="19" fill="#d8d8d8"/><text x="1729.0" y="914.5">25</text><rect x="1792.9" y="899.6" width="1.2" height="19" fill="#d8d8d8"/><text x="1795.4" y="914.5">1</text><rect x="1225.3" y="920" width="1.2" height="18.5" fill="#d8d8d8"/><text x="1227.8" y="935">June</text><rect x="1515.2" y="920" width="1.2" height="18.5" fill="#d8d8d8"/><text x="1517.7" y="935">July</text><rect x="1792.9" y="920" width="1.2" height="18.5" fill="#d8d8d8"/><text x="1795.4" y="935">August</text></g></svg><svg style="position:absolute;left:0px;top:0px" width="1920" height="975" viewBox="0 0 1920 975"><rect x="41" y="941.5" width="936" height="27.5" fill="#efefef"/><rect x="913" y="916" width="64" height="25.5" fill="#ececec"/><rect x="981" y="940.3" width="936" height="28.7" fill="#efefef"/><rect x="1853" y="938" width="64" height="3" fill="#efefef"/><rect x="1854" y="896" width="63" height="45" fill="#ececec"/><g transform="translate(0,-1.3)"><rect x="554" y="952.5" width="129" height="6" fill="#8a8a8a"/><line x1="707" y1="945" x2="707" y2="966" stroke="#909090" stroke-width="1.2"/><line x1="767" y1="945" x2="767" y2="966" stroke="#909090" stroke-width="1.2"/><line x1="879" y1="945" x2="879" y2="966" stroke="#909090" stroke-width="1.2"/><path d="M717,955 A6,6 0 0 1 728,951" fill="none" stroke="#505050" stroke-width="2.6"/><path d="M729,955 A6,6 0 0 1 718,959" fill="none" stroke="#505050" stroke-width="2.6"/><path d="M726,947 L731,951 L725,953 Z" fill="#505050"/><path d="M720,963 L715,959 L721,957 Z" fill="#505050"/><text x="750" y="961.5" text-anchor="middle" font-family="Liberation Sans" font-weight="bold" font-size="17" fill="#555555">W</text><path d="M784,947 V963 M780.5,950.5 L784,947 L787.5,950.5 M780.5,959.5 L784,963 L787.5,959.5" fill="none" stroke="#505050" stroke-width="2.2"/><path d="M810,946 V964 M801,955 H819" stroke="#505050" stroke-width="2.4"/><path d="M806.5,949 L810,945 L813.5,949 Z M806.5,961 L810,965 L813.5,961 Z M804,951.5 L800,955 L804,958.5 Z M816,951.5 L820,955 L816,958.5 Z" fill="#505050" stroke="#505050"/><circle cx="836" cy="955" r="6.5" fill="#f4f4f4" stroke="#606060" stroke-width="1.5"/><path d="M832.5,955 H839.5" stroke="#404040" stroke-width="2"/><circle cx="862" cy="955" r="6.5" fill="#f4f4f4" stroke="#606060" stroke-width="1.5"/><path d="M858.5,955 H865.5 M862,951.5 V958.5" stroke="#404040" stroke-width="2"/><path d="M899,949 L893,955 L899,961 Z" fill="#c4c4c4"/><path d="M919,949 L925,955 L919,961 Z" fill="#c4c4c4"/><rect x="940.5" y="947.5" width="15" height="15" fill="#f4f4f4" stroke="#505050" stroke-width="1.3"/><rect x="941" y="948" width="14" height="3" fill="#808080"/><path d="M943,954 H953 M943,957 H953 M943,960 H953" stroke="#606060"/><rect x="1592" y="952.5" width="31" height="6" fill="#8a8a8a"/><line x1="1647" y1="945" x2="1647" y2="966" stroke="#909090" stroke-width="1.2"/><line x1="1707" y1="945" x2="1707" y2="966" stroke="#909090" stroke-width="1.2"/><line x1="1819" y1="945" x2="1819" y2="966" stroke="#909090" stroke-width="1.2"/><path d="M1658,955 A6,6 0 0 1 1669,951" fill="none" stroke="#505050" stroke-width="2.6"/><path d="M1670,955 A6,6 0 0 1 1659,959" fill="none" stroke="#505050" stroke-width="2.6"/><path d="M1667,947 L1672,951 L1666,953 Z" fill="#505050"/><path d="M1661,963 L1656,959 L1662,957 Z" fill="#505050"/><text x="1691" y="961.5" text-anchor="middle" font-family="Liberation Sans" font-weight="bold" font-size="17" fill="#555555">D</text><path d="M1724,947 V963 M1720.5,950.5 L1724,947 L1727.5,950.5 M1720.5,959.5 L1724,963 L1727.5,959.5" fill="none" stroke="#505050" stroke-width="2.2"/><path d="M1750,946 V964 M1741,955 H1759" stroke="#505050" stroke-width="2.4"/><path d="M1746.5,949 L1750,945 L1753.5,949 Z M1746.5,961 L1750,965 L1753.5,961 Z M1744,951.5 L1740,955 L1744,958.5 Z M1756,951.5 L1760,955 L1756,958.5 Z" fill="#505050" stroke="#505050"/><circle cx="1777" cy="955" r="6.5" fill="#f4f4f4" stroke="#606060" stroke-width="1.5"/><path d="M1773.5,955 H1780.5" stroke="#404040" stroke-width="2"/><circle cx="1803" cy="955" r="6.5" fill="#f4f4f4" stroke="#606060" stroke-width="1.5"/><path d="M1799.5,955 H1806.5 M1803,951.5 V958.5" stroke="#404040" stroke-width="2"/><path d="M1840,949 L1834,955 L1840,961 Z" fill="#c4c4c4"/><path d="M1860,949 L1866,955 L1860,961 Z" fill="#c4c4c4"/><rect x="1880.5" y="947.5" width="15" height="15" fill="#f4f4f4" stroke="#505050" stroke-width="1.3"/><rect x="1881" y="948" width="14" height="3" fill="#808080"/><path d="M1883,954 H1893 M1883,957 H1893 M1883,960 H1893" stroke="#606060"/><line x1="1906" y1="944" x2="1906" y2="964" stroke="#909090" stroke-width="1.2"/><line x1="966" y1="944" x2="966" y2="964" stroke="#909090" stroke-width="1.2"/></g></svg><div style="position:absolute;left:0px;top:971px;width:1920px;height:43px;background:#e9e9e9;border-top:1px solid #f8f8f8;box-sizing:border-box;"></div><div style="position:absolute;left:0px;top:1011px;width:1920px;height:1px;background:#a8a8a8;"></div><div style="position:absolute;left:0px;top:1012px;width:1920px;height:2px;background:#f4f4f4;"></div><svg style="position:absolute;left:0px;top:0px" width="720" height="1015" viewBox="0 0 720 1015"><defs>
<linearGradient id="gbtn" x1="0" y1="0" x2="1" y2="1"><stop offset="0" stop-color="#fafafa"/><stop offset="1" stop-color="#d0d0d0"/></linearGradient>
<linearGradient id="gdoc" x1="0" y1="0" x2="1" y2="1"><stop offset="0" stop-color="#d8ecf8"/><stop offset="1" stop-color="#8cc4e4"/></linearGradient>
<linearGradient id="gP" x1="0" y1="0" x2="1" y2="1"><stop offset="0" stop-color="#c87030"/><stop offset="0.5" stop-color="#7a3a20"/><stop offset="1" stop-color="#d04010"/></linearGradient>
<linearGradient id="ggrip" x1="0" y1="0" x2="1" y2="0"><stop offset="0" stop-color="#e8e8e8"/><stop offset="1" stop-color="#b8b8b8"/></linearGradient>
<linearGradient id="ggripv" x1="0" y1="0" x2="0" y2="1"><stop offset="0" stop-color="#e4e4e4"/><stop offset="1" stop-color="#bcbcbc"/></linearGradient>
</defs><rect x="2" y="975" width="9" height="35" fill="url(#ggrip)"/><rect x="5" y="991" width="3" height="3" fill="#707070"/><rect x="321" y="975" width="9" height="35" fill="url(#ggrip)"/><rect x="324" y="991" width="3" height="3" fill="#707070"/><rect x="483" y="975" width="9" height="35" fill="url(#ggrip)"/><rect x="486" y="991" width="3" height="3" fill="#707070"/><line x1="175.5" y1="975" x2="175.5" y2="1008" stroke="#a8a8a8"/><line x1="313.5" y1="975" x2="313.5" y2="1008" stroke="#a8a8a8"/><line x1="474.5" y1="975" x2="474.5" y2="1008" stroke="#a8a8a8"/><line x1="704.5" y1="975" x2="704.5" y2="1008" stroke="#a8a8a8"/><rect x="10.5" y="981.5" width="161" height="24" rx="2" fill="#fff" stroke="#b0b0b0"/><line x1="30" y1="994" x2="131" y2="994" stroke="#404040" stroke-width="1.5"/><path d="M156,991 L161,996 L166,991" fill="none" stroke="#505050" stroke-width="1.3"/><rect x="180.5" y="981.5" width="124" height="24" rx="2" fill="#fff" stroke="#b0b0b0"/><line x1="195" y1="994" x2="269" y2="994" stroke="#404040" stroke-width="1.5"/><path d="M289,991 L294,996 L299,991" fill="none" stroke="#505050" stroke-width="1.3"/><rect x="334.4" y="980.5" width="12" height="12" fill="#e6e6fa" stroke="#a0a0a0"/><rect x="349.5" y="980.5" width="12" height="12" fill="#ffd700" stroke="#a0a0a0"/><rect x="364.6" y="980.5" width="12" height="12" fill="#ffff00" stroke="#a0a0a0"/><rect x="379.7" y="980.5" width="12" height="12" fill="#696969" stroke="#a0a0a0"/><rect x="394.8" y="980.5" width="12" height="12" fill="#32cd32" stroke="#a0a0a0"/><rect x="409.9" y="980.5" width="12" height="12" fill="#fffbe0" stroke="#a0a0a0"/><rect x="425.0" y="980.5" width="12" height="12" fill="#ff6a20" stroke="#a0a0a0"/><rect x="440.1" y="980.5" width="12" height="12" fill="#98f898" stroke="#a0a0a0"/><rect x="334.4" y="995.5" width="12" height="12" fill="#8b0000" stroke="#a0a0a0"/><rect x="349.5" y="995.5" width="12" height="12" fill="#6e8490" stroke="#a0a0a0"/><rect x="364.6" y="995.5" width="12" height="12" fill="#0000ff" stroke="#a0a0a0"/><rect x="379.7" y="995.5" width="12" height="12" fill="#009000" stroke="#a0a0a0"/><rect x="394.8" y="995.5" width="12" height="12" fill="#ff0000" stroke="#fff" stroke-dasharray="1,1"/><rect x="409.9" y="995.5" width="12" height="12" fill="#000000" stroke="#a0a0a0"/><rect x="425.0" y="995.5" width="12" height="12" fill="#3a7ca8" stroke="#a0a0a0"/><rect x="440.1" y="995.5" width="12" height="12" fill="#90d0e0" stroke="#a0a0a0"/><path d="M455,990 H462 L458.5,994 Z" fill="#101010"/><rect x="498.5" y="987.5" width="19" height="16" rx="1.5" fill="#fff" stroke="#90a8bc" stroke-width="1.2"/><rect x="499.5" y="988.5" width="9" height="2" fill="#a8d0ec"/><path d="M500.5,1000 L504.5,995.5 L506.5,997" fill="none" stroke="#d03030" stroke-width="1.2"/><text x="512" y="1001" text-anchor="middle" font-family="Liberation Serif" font-size="12.5" fill="#202020">1</text><rect x="532.5" y="987.5" width="19" height="16" rx="1.5" fill="#fff" stroke="#90a8bc" stroke-width="1.2"/><rect x="533.5" y="988.5" width="9" height="2" fill="#a8d0ec"/><path d="M534.5,1000 L538.5,995.5 L540.5,997" fill="none" stroke="#d03030" stroke-width="1.2"/><text x="546" y="1001" text-anchor="middle" font-family="Liberation Serif" font-size="12.5" fill="#202020">2</text><rect x="566.5" y="987.5" width="19" height="16" rx="1.5" fill="#fff" stroke="#90a8bc" stroke-width="1.2"/><rect x="567.5" y="988.5" width="9" height="2" fill="#a8d0ec"/><path d="M568.5,1000 L572.5,995.5 L574.5,997" fill="none" stroke="#d03030" stroke-width="1.2"/><text x="580" y="1001" text-anchor="middle" font-family="Liberation Serif" font-size="12.5" fill="#202020">3</text><rect x="600.5" y="987.5" width="19" height="16" rx="1.5" fill="#fff" stroke="#90a8bc" stroke-width="1.2"/><rect x="601.5" y="988.5" width="9" height="2" fill="#a8d0ec"/><path d="M602.5,1000 L606.5,995.5 L608.5,997" fill="none" stroke="#d03030" stroke-width="1.2"/><text x="614" y="1001" text-anchor="middle" font-family="Liberation Serif" font-size="12.5" fill="#202020">4</text><rect x="634.5" y="987.5" width="19" height="16" rx="1.5" fill="#fff" stroke="#90a8bc" stroke-width="1.2"/><rect x="635.5" y="988.5" width="9" height="2" fill="#a8d0ec"/><path d="M636.5,1000 L640.5,995.5 L642.5,997" fill="none" stroke="#d03030" stroke-width="1.2"/><text x="648" y="1001" text-anchor="middle" font-family="Liberation Serif" font-size="12.5" fill="#202020">5</text><rect x="668.5" y="987.5" width="19" height="16" rx="1.5" fill="#fff" stroke="#90a8bc" stroke-width="1.2"/><rect x="669.5" y="988.5" width="9" height="2" fill="#a8d0ec"/><path d="M670.5,1000 L674.5,995.5 L676.5,997" fill="none" stroke="#d03030" stroke-width="1.2"/><text x="682" y="1001" text-anchor="middle" font-family="Liberation Serif" font-size="12.5" fill="#202020">6</text></svg><div style="position:absolute;left:0px;top:1014px;width:1920px;height:6px;background:#434343;"></div><div style="position:absolute;left:0px;top:1020px;width:1920px;height:60px;background:#231e27;"></div><svg style="position:absolute;left:0px;top:0px" width="1920" height="1080" viewBox="0 0 1920 1080"><defs>
<linearGradient id="tsun" x1="0" y1="0" x2="0" y2="1"><stop offset="0" stop-color="#ffc000"/><stop offset="1" stop-color="#f07000"/></linearGradient>
<linearGradient id="twin" x1="0" y1="0" x2="1" y2="1"><stop offset="0" stop-color="#60d8f8"/><stop offset="1" stop-color="#1090e8"/></linearGradient>
<linearGradient id="tteam" x1="0" y1="0" x2="1" y2="1"><stop offset="0" stop-color="#8070e0"/><stop offset="1" stop-color="#5a48c0"/></linearGradient>
<linearGradient id="tms" x1="0" y1="0" x2="0" y2="1"><stop offset="0" stop-color="#707070"/><stop offset="0.5" stop-color="#202020"/><stop offset="1" stop-color="#000"/></linearGradient>
<linearGradient id="tedge" x1="0" y1="0" x2="1" y2="1"><stop offset="0" stop-color="#40d890"/><stop offset="0.5" stop-color="#1a90d8"/><stop offset="1" stop-color="#1050a0"/></linearGradient>
</defs><circle cx="40.5" cy="1050" r="12.5" fill="url(#tsun)"/><text x="65" y="1046" font-family="Liberation Sans" font-size="14" fill="#f4f4f4">26°C</text><text x="65" y="1066" font-family="Liberation Sans" font-size="14" fill="#e0e0e0">Sol</text><rect x="533" y="1036" width="13.5" height="13.5" rx="1.5" fill="url(#twin)"/><rect x="548.5" y="1036" width="13.5" height="13.5" rx="1.5" fill="url(#twin)"/><rect x="533" y="1051.5" width="13.5" height="13.5" rx="1.5" fill="url(#twin)"/><rect x="548.5" y="1051.5" width="13.5" height="13.5" rx="1.5" fill="url(#twin)"/><circle cx="606" cy="1046" r="9" fill="none" stroke="#e8e8e8" stroke-width="3"/><line x1="599" y1="1054" x2="591" y2="1062" stroke="#e8e8e8" stroke-width="3.2" stroke-linecap="round"/><path d="M657.5,1036 A14,14 0 1 1 657.5,1064 H645 L648,1058 A14,14 0 0 1 657.5,1036 Z" fill="url(#tteam)"/><rect x="649" y="1044" width="12" height="11" rx="2" fill="#fff"/><path d="M661,1049.5 L667,1045 V1054 Z" fill="#fff"/><circle cx="713" cy="1050" r="14" fill="#db4437"/><path d="M713,1050 L725.12,1043.00 A14,14 0 0 1 713.00,1064.00 Z" fill="#fcc934"/><path d="M713,1050 L713.00,1064.00 A14,14 0 0 1 700.88,1043.00 Z" fill="#1e8e3e"/><path d="M713,1050 L700.88,1043.00 A14,14 0 0 1 725.12,1043.00 Z" fill="#d93025"/><circle cx="713" cy="1050" r="6.58" fill="#fff"/><circle cx="713" cy="1050" r="5.18" fill="#4285f4"/><circle cx="720" cy="1042" r="7.5" fill="#f07010"/><text x="720" y="1046" text-anchor="middle" font-family="Liberation Sans" font-size="10" fill="#fff">N</text><rect x="753" y="1035" width="30" height="30" rx="3.5" fill="url(#tms)"/><path d="M760,1063 L761.5,1051 H765 L763.5,1063 Z" fill="#f4a020"/><path d="M765,1063 L767,1044 H770.5 L768.5,1063 Z" fill="#f48a20"/><path d="M770,1063 L772.5,1037 H776 L773.5,1063 Z" fill="#f07020"/><path d="M808,1040 V1037 H818 L821,1040 Z" fill="#e8b830"/><rect x="808" y="1040" width="30" height="24" rx="2" fill="#f8cc40"/><rect x="815" y="1057" width="16" height="7" rx="2" fill="#1a78d0"/><rect x="872" y="1038" width="20" height="25" fill="#fff" stroke="#2a5aa8"/><path d="M876,1044 H890 M876,1048 H890 M876,1052 H890 M876,1056 H890" stroke="#2a5aa8" stroke-width="1.5"/><path d="M863,1038 L880,1035 V1065 L863,1062 Z" fill="#2b5aae"/><text x="871.5" y="1055" text-anchor="middle" font-family="Liberation Sans" font-weight="bold" font-size="12" fill="#fff">W</text><rect x="873.5" y="1070" width="9" height="3" rx="1.5" fill="#9a9a9a"/><rect x="928" y="1038" width="19" height="25" fill="#fff" stroke="#d04828"/><path d="M918,1038 L937,1035 V1065 L918,1062 Z" fill="#d24726"/><text x="927" y="1055" text-anchor="middle" font-family="Liberation Sans" font-weight="bold" font-size="13" fill="#fff">P</text><path d="M987,1035 L998,1062 H976 Z" fill="#f08a10"/><path d="M982,1046 H992 L990,1041 H984 Z M979,1054 H995 L993,1050 H981 Z" fill="#f4f4f4"/><rect x="975" y="1060" width="25" height="4" rx="1" fill="#f08a10"/><circle cx="1043" cy="1050" r="15" fill="url(#tedge)"/><path d="M1033,1054 C1035,1045 1048,1043 1052,1050 C1046,1048 1040,1052 1044,1059 C1038,1060 1034,1058 1033,1054 Z" fill="#1858a8"/><rect x="1099" y="1037" width="18" height="26" fill="#fff" stroke="#3050a8"/><path d="M1088,1038 L1105,1035 V1065 L1088,1062 Z" fill="#3955a3"/><text x="1096" y="1055" text-anchor="middle" font-family="Liberation Sans" font-weight="bold" font-size="12" fill="#fff">V</text><path d="M1107,1048 L1112,1044 L1114,1052 Z" fill="none" stroke="#3050a8" stroke-width="1.5"/><rect x="1153" y="1037" width="19" height="26" fill="#fff" stroke="#1d7a44"/><path d="M1156,1043 H1170 M1156,1049 H1170 M1156,1055 H1170 M1162,1038 V1062" stroke="#1d7a44" stroke-width="1.3"/><path d="M1142,1038 L1159,1035 V1065 L1142,1062 Z" fill="#1e7145"/><text x="1150.5" y="1055" text-anchor="middle" font-family="Liberation Sans" font-weight="bold" font-size="12" fill="#fff">X</text><circle cx="1207.5" cy="1050" r="14" fill="#db4437"/><path d="M1207.5,1050 L1219.62,1043.00 A14,14 0 0 1 1207.50,1064.00 Z" fill="#fcc934"/><path d="M1207.5,1050 L1207.50,1064.00 A14,14 0 0 1 1195.38,1043.00 Z" fill="#1e8e3e"/><path d="M1207.5,1050 L1195.38,1043.00 A14,14 0 0 1 1219.62,1043.00 Z" fill="#d93025"/><circle cx="1207.5" cy="1050" r="6.58" fill="#fff"/><circle cx="1207.5" cy="1050" r="5.18" fill="#4285f4"/><rect x="1251" y="1035" width="23" height="30" rx="2" fill="#6e7c8a"/><rect x="1254" y="1038" width="17" height="5" fill="#48d0f8"/><rect x="1254" y="1045.5" width="4.6" height="4.8" fill="#d8dde2"/><rect x="1260" y="1045.5" width="4.6" height="4.8" fill="#d8dde2"/><rect x="1266" y="1045.5" width="4.6" height="4.8" fill="#d8dde2"/><rect x="1254" y="1051.8" width="4.6" height="4.8" fill="#d8dde2"/><rect x="1260" y="1051.8" width="4.6" height="4.8" fill="#d8dde2"/><rect x="1254" y="1058.1" width="4.6" height="4.8" fill="#d8dde2"/><rect x="1260" y="1058.1" width="4.6" height="4.8" fill="#d8dde2"/><rect x="1266" y="1051.8" width="4.6" height="11" fill="#1a4a90"/><rect x="1303" y="1035" width="30" height="30" fill="#0e8484"/><path d="M1318,1037 V1043 M1316,1039.5 H1320" stroke="#101010" stroke-width="1.2"/><path d="M1311,1058 C1306,1055 1305,1047 1311,1046 C1313,1046 1315,1047 1316,1049 C1316,1046 1317,1044 1318,1043.5 C1319,1044 1320,1046 1320,1049 C1321,1047 1323,1046 1325,1046 C1331,1047 1330,1055 1325,1058 Z" fill="#f4f4f4" stroke="#101010" stroke-width="1"/><path d="M1310.5,1058 H1325.5 L1326,1063 H1310 Z" fill="#f4f4f4" stroke="#101010" stroke-width="1"/><path d="M1311,1060.5 H1325" stroke="#101010" stroke-width="0.8"/><rect x="1349" y="1025" width="49" height="49" rx="4" fill="#2e2b34"/><rect x="1358" y="1035" width="30" height="30" rx="3.5" fill="url(#tms)"/><path d="M1365,1063 L1366.5,1051 H1370 L1368.5,1063 Z" fill="#f4a020"/><path d="M1370,1063 L1372,1044 H1375.5 L1373.5,1063 Z" fill="#f48a20"/><path d="M1375,1063 L1377.5,1037 H1381 L1378.5,1063 Z" fill="#f07020"/><rect x="1363" y="1071" width="20" height="3.5" rx="1.5" fill="#4cc2ff"/><path d="M1663,1056 L1670,1049 L1677,1056" fill="none" stroke="#e8e8e8" stroke-width="1.5"/><ellipse cx="1700" cy="1051" rx="10" ry="6" fill="#d8d8d8"/><circle cx="1704" cy="1046" r="5" fill="#c8c8c8"/><circle cx="1706" cy="1054" r="6" fill="#e02020"/><path d="M1703,1051 L1709,1057 M1709,1051 L1703,1057" stroke="#fff" stroke-width="1.5"/><path d="M1726,1048 A14,14 0 0 1 1746,1048 M1730,1052 A9,9 0 0 1 1742,1052 M1733.5,1055.5 A4,4 0 0 1 1738.5,1055.5" fill="none" stroke="#f0f0f0" stroke-width="2" stroke-linecap="round"/><circle cx="1736" cy="1058" r="1.5" fill="#f0f0f0"/><path d="M1757,1047 H1761 L1766,1043 V1058 L1761,1054 H1757 Z" fill="none" stroke="#f0f0f0" stroke-width="1.5"/><path d="M1769,1047 A5,5 0 0 1 1769,1054 M1772,1044 A9,9 0 0 1 1772,1057" fill="none" stroke="#f0f0f0" stroke-width="1.5"/><rect x="1791" y="1045" width="14" height="10" rx="2" fill="none" stroke="#f0f0f0" stroke-width="1.5"/><rect x="1805" y="1048" width="2" height="4" fill="#f0f0f0"/><rect x="1793" y="1047" width="4" height="6" fill="#f0f0f0"/><path d="M1788,1042 V1046 M1791,1042 V1046" stroke="#f0f0f0" stroke-width="1.2"/><text x="1900" y="1045" text-anchor="end" font-family="Liberation Sans" font-size="14" fill="#f4f4f4">14:25</text><text x="1900" y="1065" text-anchor="end" font-family="Liberation Sans" font-size="14" fill="#f4f4f4">21/07/2022</text><rect x="1843.5" y="1016.5" width="25" height="3.5" fill="#f0f0f0"/><rect x="1873.5" y="1016.5" width="26" height="3.5" fill="#d8dce8"/></svg>
</body></html>
